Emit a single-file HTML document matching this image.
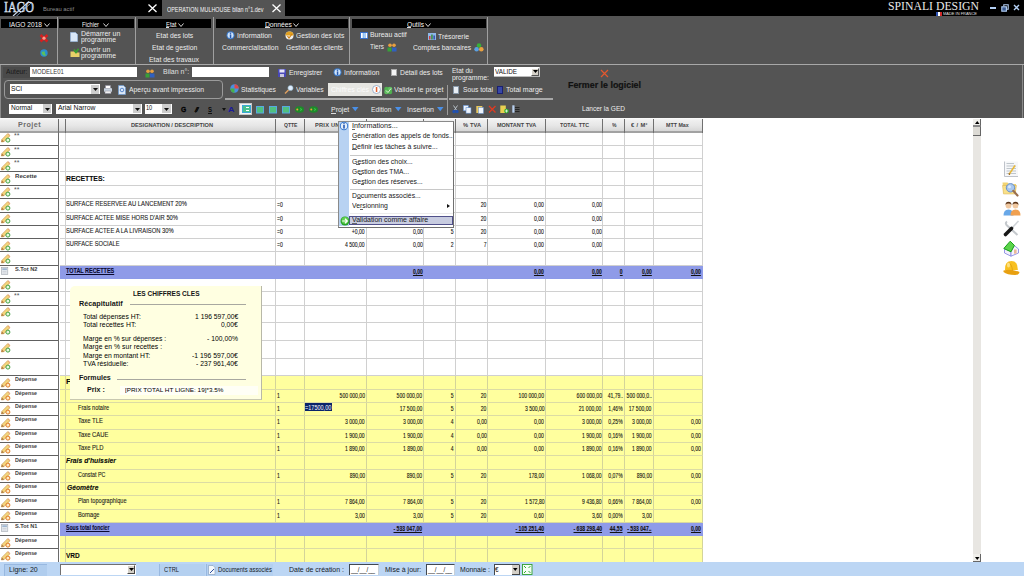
<!DOCTYPE html>
<html><head><meta charset="utf-8"><title>IAGO</title>
<style>
html,body{margin:0;padding:0;width:1024px;height:576px;overflow:hidden;background:#fff;position:relative}
.b{position:absolute;box-sizing:border-box}
.t{position:absolute;white-space:nowrap;line-height:1;transform-origin:0 0}
svg{position:absolute;overflow:visible}
</style></head><body>
<div class="b" style="left:0.00px;top:0.00px;width:1024.00px;height:16.00px;background:#000"></div>
<div class="t" style="left:4.20px;top:0.00px;font-size:14.5px;color:#9fb8da;font-family:'Liberation Serif', serif;transform:scaleX(0.8276);-webkit-text-stroke:0.45px #eef4fc;">IAGO</div>
<svg style="left:10px;top:0px" width="24" height="17" viewBox="0 0 24 17"><line x1="3" y1="16" x2="19" y2="1.5" stroke="#c8d8ee" stroke-width="1.1"/><line x1="6" y1="16.5" x2="21" y2="3" stroke="#9cb8dc" stroke-width="0.8"/></svg>
<div class="t" style="left:43.00px;top:6.00px;font-size:6.2px;color:#8c8c8c;font-family:'Liberation Sans', sans-serif;transform:scaleX(0.9385);">Bureau actif</div>
<svg style="left:147px;top:3px" width="11" height="10" viewBox="0 0 11 10"><path d="M1.5 1.5L9.5 9M9.5 1.5L1.5 9" stroke="#fff" stroke-width="1.3"/></svg>
<div class="b" style="left:162.00px;top:0.00px;width:123.00px;height:17.00px;background:#545454"></div>
<div class="t" style="left:166.80px;top:6.00px;font-size:7px;color:#f4f4f4;font-family:'Liberation Sans', sans-serif;transform:scaleX(0.7731);">OPERATION MULHOUSE bilan n°1.dev</div>
<svg style="left:271px;top:3px" width="11" height="10" viewBox="0 0 11 10"><path d="M1.5 1.5L9.5 9M9.5 1.5L1.5 9" stroke="#fff" stroke-width="1.3"/></svg>
<div class="t" style="left:888.00px;top:0.00px;font-size:12.8px;color:#e8e8e8;font-family:'Liberation Serif', serif;transform:scaleX(0.9175);">SPINALI DESIGN</div>
<div class="b" style="left:936.00px;top:12.00px;width:2.00px;height:3.50px;background:#2a4fb0"></div>
<div class="b" style="left:938.00px;top:12.00px;width:2.00px;height:3.50px;background:#fff"></div>
<div class="b" style="left:940.00px;top:12.00px;width:2.00px;height:3.50px;background:#d02828"></div>
<div class="t" style="left:943.00px;top:12.00px;font-size:4px;color:#e0e0e0;font-family:'Liberation Sans', sans-serif;transform:scaleX(0.9932);">MADE IN FRANCE</div>
<div class="b" style="left:990.00px;top:7.00px;width:6.00px;height:1.60px;background:#b4d0f4"></div>
<svg style="left:1000.5px;top:3.5px" width="8" height="8" viewBox="0 0 8 8"><rect x="0.8" y="2.8" width="4.6" height="4.4" fill="#3a5a90" stroke="#b4d0f4" stroke-width="1.1"/><path d="M2.8 2.3V0.8H7.2V5.2H5.9" fill="none" stroke="#b4d0f4" stroke-width="1.1"/></svg>
<svg style="left:1012.5px;top:3.5px" width="7" height="7" viewBox="0 0 7 7"><path d="M1 1L6 6M6 1L1 6" stroke="#b4d0f4" stroke-width="1.4"/></svg>
<div class="b" style="left:0.00px;top:16.00px;width:1024.00px;height:48.00px;background:#545454"></div>
<div class="b" style="left:162.00px;top:16.00px;width:123.00px;height:1.00px;background:#545454"></div>
<div class="b" style="left:1.00px;top:18.50px;width:55.50px;height:9.00px;background:#000"></div>
<div class="b" style="left:59.00px;top:18.50px;width:74.50px;height:9.00px;background:#000"></div>
<div class="b" style="left:138.00px;top:18.50px;width:72.50px;height:9.00px;background:#000"></div>
<div class="b" style="left:216.00px;top:18.50px;width:131.50px;height:9.00px;background:#000"></div>
<div class="b" style="left:352.00px;top:18.50px;width:133.50px;height:9.00px;background:#000"></div>
<div class="b" style="left:57.00px;top:16.50px;width:1.00px;height:47.00px;background:#a0a0a0"></div>
<div class="b" style="left:135.00px;top:16.50px;width:1.00px;height:47.00px;background:#a0a0a0"></div>
<div class="b" style="left:213.00px;top:16.50px;width:1.00px;height:47.00px;background:#a0a0a0"></div>
<div class="b" style="left:349.00px;top:16.50px;width:1.00px;height:47.00px;background:#a0a0a0"></div>
<div class="b" style="left:487.00px;top:16.50px;width:1.00px;height:47.00px;background:#a0a0a0"></div>
<div class="b" style="left:0.00px;top:64.00px;width:1024.00px;height:1.00px;background:#a8a8a8"></div>
<div class="t" style="left:9.40px;top:22.00px;font-size:6.8px;color:#f4f4f4;font-family:'Liberation Sans', sans-serif;transform:scaleX(0.9701);">IAGO 2018</div>
<div class="t" style="left:81.90px;top:22.00px;font-size:6.8px;color:#f4f4f4;font-family:'Liberation Sans', sans-serif;transform:scaleX(0.8331);">Fichier</div>
<div class="t" style="left:165.50px;top:22.00px;font-size:6.8px;color:#f4f4f4;font-family:'Liberation Sans', sans-serif;transform:scaleX(0.8682);">Etat</div>
<div class="t" style="left:264.80px;top:22.00px;font-size:6.8px;color:#f4f4f4;font-family:'Liberation Sans', sans-serif;transform:scaleX(0.9920);">Données</div>
<div class="t" style="left:406.50px;top:22.00px;font-size:6.8px;color:#f4f4f4;font-family:'Liberation Sans', sans-serif;transform:scaleX(0.9784);">Outils</div>
<svg style="left:43.5px;top:22.5px" width="6" height="4" viewBox="0 0 6 4"><path d="M0.5 0.5L3 3.5L5.5 0.5" fill="none" stroke="#f0f0f0" stroke-width="0.9"/></svg>
<svg style="left:102.5px;top:22.5px" width="6" height="4" viewBox="0 0 6 4"><path d="M0.5 0.5L3 3.5L5.5 0.5" fill="none" stroke="#f0f0f0" stroke-width="0.9"/></svg>
<svg style="left:178px;top:22.5px" width="6" height="4" viewBox="0 0 6 4"><path d="M0.5 0.5L3 3.5L5.5 0.5" fill="none" stroke="#f0f0f0" stroke-width="0.9"/></svg>
<svg style="left:293px;top:22.5px" width="6" height="4" viewBox="0 0 6 4"><path d="M0.5 0.5L3 3.5L5.5 0.5" fill="none" stroke="#f0f0f0" stroke-width="0.9"/></svg>
<svg style="left:424.5px;top:22.5px" width="6" height="4" viewBox="0 0 6 4"><path d="M0.5 0.5L3 3.5L5.5 0.5" fill="none" stroke="#f0f0f0" stroke-width="0.9"/></svg>
<div class="b" style="left:265.00px;top:27.20px;width:4.50px;height:0.70px;background:#ddd"></div>
<div class="b" style="left:406.80px;top:27.20px;width:4.50px;height:0.70px;background:#ddd"></div>
<div class="b" style="left:165.80px;top:27.20px;width:3.50px;height:0.70px;background:#ddd"></div>
<svg style="left:39px;top:33px" width="10" height="10" viewBox="0 0 10 10"><path d="M1.5 2L8.5 8.5M8.5 2L1.5 8.5" stroke="#d42020" stroke-width="2.6"/><circle cx="5" cy="5.2" r="1.6" fill="#ff9a8a"/></svg>
<svg style="left:39.5px;top:48.5px" width="8" height="8" viewBox="0 0 8 8"><circle cx="4" cy="4" r="3.7" fill="#2a8ed0"/><path d="M1.5 3.5C2.5 2 3.5 3 4.5 2.2C5.5 3.5 4 5 6.5 6C5 7.5 2.5 7 1.5 3.5Z" fill="#5cc05c"/></svg>
<svg style="left:70px;top:31.5px" width="8" height="10" viewBox="0 0 8 10"><path d="M0.5 0.5H5.5L7.5 2.5V9.5H0.5Z" fill="#dbe8f8" stroke="#9ab8e0" stroke-width="0.7"/></svg>
<div class="t" style="left:80.60px;top:31.00px;font-size:6.6px;color:#ececec;font-family:'Liberation Sans', sans-serif;transform:scaleX(1.0600);letter-spacing:0.015px;">Démarrer un</div>
<div class="t" style="left:80.60px;top:37.00px;font-size:6.6px;color:#ececec;font-family:'Liberation Sans', sans-serif;transform:scaleX(1.0380);">programme</div>
<svg style="left:69.5px;top:47.5px" width="10" height="10" viewBox="0 0 10 10"><path d="M0.5 3.5H4L5 4.5H9.5V9H0.5Z" fill="#e8d068"/><path d="M4 1.5L6 4.5L8.5 0.8" fill="none" stroke="#38a030" stroke-width="1.6"/></svg>
<div class="t" style="left:80.60px;top:47.00px;font-size:6.6px;color:#ececec;font-family:'Liberation Sans', sans-serif;transform:scaleX(1.0600);letter-spacing:0.088px;">Ouvrir un</div>
<div class="t" style="left:80.60px;top:53.00px;font-size:6.6px;color:#ececec;font-family:'Liberation Sans', sans-serif;transform:scaleX(1.0380);">programme</div>
<div class="t" style="left:155.75px;top:33.00px;font-size:6.6px;color:#ececec;font-family:'Liberation Sans', sans-serif;transform:scaleX(1.0263);">Etat des lots</div>
<div class="t" style="left:151.50px;top:45.00px;font-size:6.6px;color:#ececec;font-family:'Liberation Sans', sans-serif;transform:scaleX(1.0284);">Etat de gestion</div>
<div class="t" style="left:149.25px;top:57.00px;font-size:6.6px;color:#ececec;font-family:'Liberation Sans', sans-serif;transform:scaleX(1.0492);">Etat des travaux</div>
<svg style="left:225.5px;top:31px" width="9" height="9" viewBox="0 0 9 9"><circle cx="4.5" cy="4.3" r="4" fill="#3a78c8"/><circle cx="4.5" cy="4.3" r="3" fill="#cfe4fa"/><rect x="3.8" y="3.4" width="1.5" height="3.6" fill="#2a5ab0"/><circle cx="4.5" cy="2.3" r="0.8" fill="#2a5ab0"/></svg>
<div class="t" style="left:237.00px;top:33.00px;font-size:6.6px;color:#ececec;font-family:'Liberation Sans', sans-serif;transform:scaleX(1.0600);letter-spacing:0.002px;">Information</div>
<div class="t" style="left:221.75px;top:45.00px;font-size:6.6px;color:#ececec;font-family:'Liberation Sans', sans-serif;transform:scaleX(1.0418);">Commercialisation</div>
<svg style="left:285px;top:31px" width="9" height="9" viewBox="0 0 9 9"><circle cx="4.5" cy="4.5" r="4" fill="#f0f0f0"/><path d="M0.5 4.5A4 4 0 0 1 8.5 4.5L4.5 4.5Z" fill="#e0a020"/><path d="M2.5 5L4 7L7 3" fill="none" stroke="#d08010" stroke-width="1.2"/></svg>
<div class="t" style="left:295.75px;top:33.00px;font-size:6.6px;color:#ececec;font-family:'Liberation Sans', sans-serif;transform:scaleX(1.0205);">Gestion des lots</div>
<div class="t" style="left:286.00px;top:45.00px;font-size:6.6px;color:#ececec;font-family:'Liberation Sans', sans-serif;transform:scaleX(1.0230);">Gestion des clients</div>
<svg style="left:360px;top:31.5px" width="8" height="7" viewBox="0 0 8 7"><rect x="0" y="0" width="8" height="7" fill="#3a70c8"/><rect x="1" y="1" width="1.8" height="5" fill="#fff"/><rect x="3.2" y="1" width="1.8" height="5" fill="#9fd0ff"/><rect x="5.4" y="1" width="1.8" height="5" fill="#fff"/></svg>
<div class="t" style="left:369.50px;top:32.00px;font-size:6.6px;color:#ececec;font-family:'Liberation Sans', sans-serif;transform:scaleX(1.0444);">Bureau actif</div>
<div class="t" style="left:370.00px;top:44.00px;font-size:6.6px;color:#ececec;font-family:'Liberation Sans', sans-serif;transform:scaleX(0.9707);">Tiers</div>
<svg style="left:387px;top:42.5px" width="10" height="9" viewBox="0 0 10 9"><circle cx="3" cy="2.3" r="1.8" fill="#e8a040"/><circle cx="7" cy="2.3" r="1.8" fill="#e8a040"/><rect x="0.5" y="4.5" width="4" height="4" fill="#38a038"/><rect x="5" y="4.5" width="4.5" height="4" fill="#3060c0"/></svg>
<svg style="left:427.5px;top:33px" width="8" height="7" viewBox="0 0 8 7"><rect x="0" y="0" width="8" height="7" fill="#8fb8e8"/><rect x="1" y="3" width="1.5" height="3.5" fill="#d04040"/><rect x="3.2" y="1.5" width="1.5" height="5" fill="#3a8a3a"/><rect x="5.4" y="2.5" width="1.5" height="4" fill="#3050b0"/></svg>
<div class="t" style="left:438.00px;top:34.00px;font-size:6.6px;color:#ececec;font-family:'Liberation Sans', sans-serif;transform:scaleX(1.0398);">Trésorerie</div>
<div class="t" style="left:413.40px;top:45.00px;font-size:6.6px;color:#ececec;font-family:'Liberation Sans', sans-serif;transform:scaleX(1.0209);">Comptes bancaires</div>
<svg style="left:474px;top:42.5px" width="10" height="9" viewBox="0 0 10 9"><circle cx="5" cy="2.5" r="2.3" fill="#38b038"/><circle cx="2.6" cy="6.3" r="2.3" fill="#5ca0e0"/><circle cx="7.3" cy="6.3" r="2.3" fill="#e8a040"/></svg>
<div class="b" style="left:0.00px;top:64.70px;width:1024.00px;height:53.60px;background:#545454"></div>
<div class="b" style="left:0.00px;top:64.70px;width:1.00px;height:53.60px;background:#8a8a8a"></div>
<div class="b" style="left:1021.50px;top:64.70px;width:1.00px;height:53.60px;background:#8a8a8a"></div>
<div class="b" style="left:3.00px;top:66.50px;width:27.00px;height:11.30px;background:#4a4a4a"></div>
<div class="t" style="left:5.60px;top:69.00px;font-size:6.6px;color:#1a1a1a;font-family:'Liberation Sans', sans-serif;transform:scaleX(1.0016);">Auteur:</div>
<div class="b" style="left:30.00px;top:66.80px;width:107.00px;height:10.40px;background:#fff"></div>
<div class="t" style="left:31.90px;top:69.00px;font-size:6.6px;color:#383838;font-family:'Liberation Sans', sans-serif;transform:scaleX(0.9066);">MODELE01</div>
<svg style="left:145px;top:68.5px" width="10" height="9" viewBox="0 0 10 9"><circle cx="3" cy="2.3" r="1.8" fill="#e8a040"/><circle cx="7" cy="2.3" r="1.8" fill="#e8a040"/><rect x="0.5" y="4.5" width="4" height="4" fill="#38a038"/><rect x="5" y="4.5" width="4.5" height="4" fill="#3060c0"/></svg>
<div class="t" style="left:163.00px;top:69.00px;font-size:6.6px;color:#e0e0e0;font-family:'Liberation Sans', sans-serif;transform:scaleX(1.0600);letter-spacing:0.015px;">Bilan n°:</div>
<div class="b" style="left:192.40px;top:66.80px;width:77.00px;height:10.40px;background:#fff"></div>
<svg style="left:278px;top:68.5px" width="8" height="8" viewBox="0 0 8 8"><rect x="0" y="0" width="8" height="8" fill="#4848b8"/><rect x="1.5" y="0.5" width="5" height="3" fill="#e8e8f8"/><rect x="2" y="5" width="4" height="3" fill="#c8c8e0"/></svg>
<div class="t" style="left:288.75px;top:70.00px;font-size:6.6px;color:#ececec;font-family:'Liberation Sans', sans-serif;transform:scaleX(1.0310);">Enregistrer</div>
<svg style="left:332.8px;top:68px" width="9" height="9" viewBox="0 0 9 9"><circle cx="4.5" cy="4.3" r="4" fill="#3a78c8"/><circle cx="4.5" cy="4.3" r="3" fill="#cfe4fa"/><rect x="3.8" y="3.4" width="1.5" height="3.6" fill="#2a5ab0"/><circle cx="4.5" cy="2.3" r="0.8" fill="#2a5ab0"/></svg>
<div class="t" style="left:343.50px;top:70.00px;font-size:6.6px;color:#ececec;font-family:'Liberation Sans', sans-serif;transform:scaleX(1.0600);letter-spacing:0.049px;">Information</div>
<div class="b" style="left:390.90px;top:69.40px;width:6.30px;height:6.60px;background:#f4f4f4;border:0.7px solid #aaa"></div>
<div class="t" style="left:400.00px;top:70.00px;font-size:6.6px;color:#ececec;font-family:'Liberation Sans', sans-serif;transform:scaleX(1.0321);">Détail des lots</div>
<div class="t" style="left:452.00px;top:68.00px;font-size:6.6px;color:#ececec;font-family:'Liberation Sans', sans-serif;transform:scaleX(0.9925);">Etat du</div>
<div class="t" style="left:452.00px;top:75.00px;font-size:6.6px;color:#ececec;font-family:'Liberation Sans', sans-serif;transform:scaleX(1.0409);">programme:</div>
<div class="b" style="left:493.75px;top:66.90px;width:46.50px;height:10.60px;background:#fff;border-right:1px solid #ccc;border-bottom:1px solid #bbb"></div>
<div class="t" style="left:495.00px;top:68.00px;font-size:7px;color:#111;font-family:'Liberation Sans', sans-serif;transform:scaleX(0.9020);">VALIDE</div>
<div class="b" style="left:530.70px;top:67.50px;width:8.30px;height:8.80px;background:#d4d0c8;border-right:1px solid #555;border-bottom:1px solid #555;border-top:1px solid #fff;border-left:1px solid #fff"></div>
<svg style="left:532.5px;top:70.3px" width="5" height="3" viewBox="0 0 5 3"><path d="M0 0H5L2.5 3Z" fill="#000"/></svg>
<svg style="left:600px;top:68.5px" width="9" height="9" viewBox="0 0 9 9"><path d="M1 1L8 8M8 1L1 8" stroke="#e4582e" stroke-width="1.2"/></svg>
<div class="t" style="left:568.00px;top:81.00px;font-size:9px;color:#111;font-family:'Liberation Sans', sans-serif;font-weight:bold;transform:scaleX(0.9861);-webkit-text-stroke:0.2px #111;">Fermer le logiciel</div>
<div class="b" style="left:4.00px;top:80.00px;width:218.50px;height:18.50px;border:1.2px solid #9a9a9a;border-radius:4px"></div>
<div class="b" style="left:9.50px;top:84.40px;width:90.50px;height:10.00px;background:#fff"></div>
<div class="t" style="left:11.25px;top:86.00px;font-size:6.6px;color:#111;font-family:'Liberation Sans', sans-serif;transform:scaleX(1.0227);">SCI</div>
<div class="b" style="left:90.60px;top:85.00px;width:8.80px;height:9.00px;background:#cdcdcd"></div>
<svg style="left:92.5px;top:88.3px" width="5" height="3" viewBox="0 0 5 3"><path d="M0 0H5L2.5 3Z" fill="#111"/></svg>
<svg style="left:102.5px;top:85px" width="10" height="9" viewBox="0 0 10 9"><rect x="1" y="3" width="8" height="4" rx="1" fill="#c8d4e0"/><rect x="2.5" y="0.5" width="5" height="3" fill="#fff" stroke="#889" stroke-width="0.5"/><rect x="2" y="6" width="6" height="2.5" fill="#f0f0f0" stroke="#889" stroke-width="0.5"/></svg>
<svg style="left:118px;top:85px" width="8" height="10" viewBox="0 0 8 10"><path d="M0.5 0.5H5.5L7.5 2.5V9.5H0.5Z" fill="#dbe8f8" stroke="#6a98d0" stroke-width="0.7"/><circle cx="4" cy="5" r="1.8" fill="none" stroke="#3a70c0" stroke-width="0.8"/></svg>
<div class="t" style="left:128.50px;top:87.00px;font-size:6.6px;color:#ececec;font-family:'Liberation Sans', sans-serif;transform:scaleX(1.0347);">Aperçu avant impression</div>
<svg style="left:229.5px;top:84.4px" width="9" height="9" viewBox="0 0 9 9"><circle cx="4.5" cy="4.5" r="4.2" fill="#4a90e0"/><path d="M4.5 4.5V0.3A4.2 4.2 0 0 1 8.7 4.5Z" fill="#e04848"/><path d="M4.5 4.5H0.3A4.2 4.2 0 0 0 4.5 8.7Z" fill="#48b048"/></svg>
<div class="t" style="left:240.50px;top:87.00px;font-size:6.6px;color:#ececec;font-family:'Liberation Sans', sans-serif;transform:scaleX(1.0236);">Statistiques</div>
<svg style="left:284px;top:85px" width="10" height="9" viewBox="0 0 10 9"><circle cx="6.5" cy="3" r="2.6" fill="#dfeeff" stroke="#8ab" stroke-width="0.6"/><line x1="4.5" y1="5" x2="1" y2="8.5" stroke="#e0a060" stroke-width="1.5"/></svg>
<div class="t" style="left:295.75px;top:87.00px;font-size:6.6px;color:#ececec;font-family:'Liberation Sans', sans-serif;transform:scaleX(1.0278);">Variables</div>
<div class="b" style="left:327.90px;top:83.10px;width:54.10px;height:12.50px;background:#e6e6e2"></div>
<div class="t" style="left:331.00px;top:87.00px;font-size:6.6px;color:#fbfbfb;font-family:'Liberation Sans', sans-serif;transform:scaleX(1.0510);">Chiffres clés</div>
<svg style="left:371.5px;top:84.5px" width="9" height="9" viewBox="0 0 9 9"><circle cx="4.5" cy="4.5" r="4" fill="#fff" stroke="#88a0c0" stroke-width="0.8"/><rect x="3.8" y="2" width="1.5" height="5" fill="#e06030"/></svg>
<svg style="left:384px;top:85.5px" width="8.5" height="9" viewBox="0 0 8.5 9"><circle cx="2.5" cy="3" r="2.3" fill="#50b050"/><circle cx="6" cy="3" r="2.3" fill="#60c060"/><circle cx="2.5" cy="6" r="2.3" fill="#60c060"/><circle cx="6" cy="6" r="2.3" fill="#50b050"/><path d="M2 4.5L4 6.5L7 2.5" fill="none" stroke="#e8f8e0" stroke-width="0.9"/></svg>
<div class="t" style="left:394.00px;top:87.00px;font-size:6.6px;color:#ececec;font-family:'Liberation Sans', sans-serif;transform:scaleX(1.0600);letter-spacing:0.080px;">Valider le projet</div>
<div class="b" style="left:225.00px;top:98.40px;width:221.50px;height:1.50px;background:#a8a8a8"></div>
<div class="b" style="left:449.00px;top:98.40px;width:104.00px;height:1.50px;background:#a8a8a8"></div>
<div class="b" style="left:447.00px;top:85.00px;width:1.20px;height:29.50px;background:#9a9a9a"></div>
<div class="b" style="left:452.75px;top:85.60px;width:6.25px;height:8.00px;background:#e8eef4;border:0.6px solid #8898a8"></div>
<div class="t" style="left:462.75px;top:87.00px;font-size:6.6px;color:#ececec;font-family:'Liberation Sans', sans-serif;transform:scaleX(1.0229);">Sous total</div>
<div class="b" style="left:496.50px;top:85.60px;width:6.25px;height:8.00px;background:#3848a8;border:0.6px solid #1a2070"></div>
<div class="t" style="left:505.90px;top:87.00px;font-size:6.6px;color:#ececec;font-family:'Liberation Sans', sans-serif;transform:scaleX(1.0600);letter-spacing:0.017px;">Total marge</div>
<div class="b" style="left:9.00px;top:103.75px;width:43.00px;height:10.00px;background:#fff"></div>
<div class="t" style="left:11.00px;top:105.00px;font-size:6.6px;color:#111;font-family:'Liberation Sans', sans-serif;">Normal</div>
<div class="b" style="left:43.00px;top:104.30px;width:8.30px;height:9.00px;background:#cdcdcd"></div>
<svg style="left:44.7px;top:107.6px" width="5" height="3" viewBox="0 0 5 3"><path d="M0 0H5L2.5 3Z" fill="#111"/></svg>
<div class="b" style="left:56.00px;top:103.75px;width:85.50px;height:10.00px;background:#fff"></div>
<div class="t" style="left:57.75px;top:105.00px;font-size:6.6px;color:#111;font-family:'Liberation Sans', sans-serif;transform:scaleX(1.0336);">Arial Narrow</div>
<div class="b" style="left:132.80px;top:104.30px;width:8.30px;height:9.00px;background:#cdcdcd"></div>
<svg style="left:134.5px;top:107.6px" width="5" height="3" viewBox="0 0 5 3"><path d="M0 0H5L2.5 3Z" fill="#111"/></svg>
<div class="b" style="left:145.00px;top:103.75px;width:27.00px;height:10.00px;background:#fff"></div>
<div class="t" style="left:145.50px;top:105.00px;font-size:6.6px;color:#111;font-family:'Liberation Sans', sans-serif;transform:scaleX(0.8511);">10</div>
<div class="b" style="left:162.00px;top:104.30px;width:9.00px;height:9.00px;background:#cdcdcd"></div>
<svg style="left:164px;top:107.6px" width="5" height="3" viewBox="0 0 5 3"><path d="M0 0H5L2.5 3Z" fill="#111"/></svg>
<div class="t" style="left:180.50px;top:106.00px;font-size:7.5px;color:#000;font-family:'Liberation Sans', sans-serif;font-weight:bold;transform:scaleX(0.8898);-webkit-text-stroke:0.3px #000;">G</div>
<div class="t" style="left:194.00px;top:106.00px;font-size:7px;color:#0a0a0a;font-family:'Liberation Sans', sans-serif;font-weight:bold;font-style:italic;transform:scaleX(2.5600);">I</div>
<svg style="left:194px;top:106.5px" width="6" height="6" viewBox="0 0 6 6"><line x1="4.5" y1="0.5" x2="1.5" y2="5.5" stroke="#111" stroke-width="1.1"/></svg>
<div class="t" style="left:208.00px;top:106.00px;font-size:7px;color:#0a0a0a;font-family:'Liberation Sans', sans-serif;font-weight:bold;transform:scaleX(0.8562);">S</div>
<div class="b" style="left:208.00px;top:112.50px;width:4.00px;height:0.80px;background:#111"></div>
<svg style="left:222px;top:107.5px" width="4" height="3" viewBox="0 0 4 3"><path d="M0 0H4L2 3Z" fill="#111"/></svg>
<div class="t" style="left:228.00px;top:106.00px;font-size:7.5px;color:#1a1a9a;font-family:'Liberation Sans', sans-serif;font-weight:bold;transform:scaleX(1.1988);">A</div>
<div class="b" style="left:239.25px;top:103.10px;width:13.15px;height:11.90px;background:#f4f4f4;border:0.6px solid #c8c8c8"></div>
<svg style="left:241.5px;top:105px" width="9" height="8" viewBox="0 0 9 8"><rect x="0" y="0" width="9" height="8" fill="#3ca8d8"/><rect x="1" y="1" width="7" height="6" fill="#48c090"/><rect x="4" y="2" width="3" height="1" fill="#fff"/><rect x="4" y="5" width="3" height="1" fill="#fff"/></svg>
<svg style="left:256px;top:105.6px" width="8" height="7.5" viewBox="0 0 8 7.5"><rect x="0" y="0" width="8" height="7.5" fill="#58a8e0"/><rect x="1" y="1" width="6" height="5.5" fill="#50c080"/></svg>
<svg style="left:268.5px;top:105.6px" width="8" height="7.5" viewBox="0 0 8 7.5"><rect x="0" y="0" width="8" height="7.5" fill="#58a8e0"/><rect x="1" y="1" width="6" height="5.5" fill="#50c080"/></svg>
<svg style="left:282.25px;top:105.6px" width="8" height="7.5" viewBox="0 0 8 7.5"><rect x="0" y="0" width="8" height="7.5" fill="#58a8e0"/><rect x="1" y="1" width="6" height="5.5" fill="#50c080"/></svg>
<svg style="left:295px;top:105.8px" width="9" height="7" viewBox="0 0 9 7"><ellipse cx="4.5" cy="3.5" rx="4.5" ry="3.3" fill="#1e8a2a"/><circle cx="2.3" cy="3.5" r="1" fill="#f0a040"/><path d="M5 2.5L7 3.5L5 4.5" stroke="#3cd050" stroke-width="0.8" fill="none"/></svg>
<svg style="left:308.5px;top:105.8px" width="9" height="7" viewBox="0 0 9 7"><ellipse cx="4.5" cy="3.5" rx="4.5" ry="3.3" fill="#1e8a2a"/><circle cx="2.3" cy="3.5" r="1" fill="#f0a040"/><path d="M5 2.5L7 3.5L5 4.5" stroke="#3cd050" stroke-width="0.8" fill="none"/></svg>
<div class="t" style="left:330.75px;top:107.00px;font-size:6.6px;color:#ececec;font-family:'Liberation Sans', sans-serif;transform:scaleX(1.0589);">Projet</div>
<div class="b" style="left:331.00px;top:112.60px;width:4.50px;height:0.60px;background:#ddd"></div>
<svg style="left:352.2px;top:106.5px" width="6.5" height="4.2" viewBox="0 0 6.5 4.2"><path d="M0 0H6.5L3.25 4.2Z" fill="#4a90e8"/></svg>
<div class="t" style="left:371.00px;top:107.00px;font-size:6.6px;color:#ececec;font-family:'Liberation Sans', sans-serif;transform:scaleX(1.0163);">Edition</div>
<svg style="left:394.6px;top:106.5px" width="6.5" height="4.2" viewBox="0 0 6.5 4.2"><path d="M0 0H6.5L3.25 4.2Z" fill="#4a90e8"/></svg>
<div class="t" style="left:406.50px;top:107.00px;font-size:6.6px;color:#ececec;font-family:'Liberation Sans', sans-serif;transform:scaleX(1.0600);letter-spacing:0.022px;">Insertion</div>
<svg style="left:436.5px;top:106.5px" width="6.5" height="4.2" viewBox="0 0 6.5 4.2"><path d="M0 0H6.5L3.25 4.2Z" fill="#4a90e8"/></svg>
<svg style="left:452px;top:105px" width="7" height="8.5" viewBox="0 0 7 8.5"><circle cx="2" cy="6.5" r="1.7" fill="#2050b0"/><circle cx="5" cy="6.5" r="1.7" fill="#2050b0"/><path d="M1.5 0.5L4.5 5M5.5 0.5L2.5 5" stroke="#c0c8d0" stroke-width="0.9"/></svg>
<svg style="left:462.75px;top:105px" width="8.5" height="8.5" viewBox="0 0 8.5 8.5"><rect x="0.3" y="0.3" width="5" height="5.5" fill="#eef4fc" stroke="#5a88c8" stroke-width="0.6"/><rect x="3" y="2.7" width="5" height="5.5" fill="#eef4fc" stroke="#5a88c8" stroke-width="0.6"/></svg>
<svg style="left:475.9px;top:105px" width="8" height="8.5" viewBox="0 0 8 8.5"><rect x="0.3" y="1" width="6" height="7" fill="#e8c860"/><rect x="2.5" y="2.5" width="5" height="6" fill="#eef4fc" stroke="#5a88c8" stroke-width="0.5"/></svg>
<svg style="left:487.5px;top:105px" width="8.5" height="8.5" viewBox="0 0 8.5 8.5"><path d="M1 1L7.5 7.5M7.5 1L1 7.5" stroke="#e03a20" stroke-width="1.3"/></svg>
<svg style="left:499.6px;top:105px" width="9" height="8.5" viewBox="0 0 9 8.5"><rect x="0.3" y="0.5" width="5.5" height="7.5" fill="#e8d050"/><circle cx="6.5" cy="6" r="2.3" fill="#30b030"/><path d="M6.5 4.5V7.5M5 6H8" stroke="#fff" stroke-width="0.7"/></svg>
<svg style="left:512px;top:105px" width="8" height="8" viewBox="0 0 8 8"><rect x="0.3" y="0.3" width="2.2" height="7.4" fill="#b8d0f0"/><path d="M3 2.5H7.5M3 4.5H7.5M3 6.5H7.5" stroke="#202020" stroke-width="0.9"/></svg>
<div class="t" style="left:582.00px;top:106.00px;font-size:6.6px;color:#ececec;font-family:'Liberation Sans', sans-serif;transform:scaleX(0.9942);">Lancer la GED</div>
<div class="b" style="left:0.00px;top:118.30px;width:1024.00px;height:444.20px;background:#fff"></div>
<div class="b" style="left:0.00px;top:118.40px;width:702.50px;height:13.00px;background:linear-gradient(#fdfdfd,#f0f0f0 15%,#e6e6e6 60%,#d6d6d6)"></div>
<div class="b" style="left:65.00px;top:118.60px;width:1.20px;height:13.40px;background:#707070"></div>
<div class="b" style="left:275.15px;top:118.60px;width:1.20px;height:13.40px;background:#707070"></div>
<div class="b" style="left:303.90px;top:118.60px;width:1.20px;height:13.40px;background:#707070"></div>
<div class="b" style="left:365.50px;top:118.60px;width:1.20px;height:13.40px;background:#707070"></div>
<div class="b" style="left:422.90px;top:118.60px;width:1.20px;height:13.40px;background:#707070"></div>
<div class="b" style="left:454.65px;top:118.60px;width:1.20px;height:13.40px;background:#707070"></div>
<div class="b" style="left:486.90px;top:118.60px;width:1.20px;height:13.40px;background:#707070"></div>
<div class="b" style="left:545.15px;top:118.60px;width:1.20px;height:13.40px;background:#707070"></div>
<div class="b" style="left:602.15px;top:118.60px;width:1.20px;height:13.40px;background:#707070"></div>
<div class="b" style="left:623.90px;top:118.60px;width:1.20px;height:13.40px;background:#707070"></div>
<div class="b" style="left:652.50px;top:118.60px;width:1.20px;height:13.40px;background:#707070"></div>
<div class="b" style="left:701.90px;top:118.60px;width:1.20px;height:13.40px;background:#707070"></div>
<div class="t" style="left:18.00px;top:122.00px;font-size:6.8px;color:#6c6c6c;font-family:'Liberation Sans', sans-serif;font-weight:bold;transform:scaleX(1.0600);letter-spacing:0.411px;">Projet</div>
<div class="t" style="left:130.50px;top:123.00px;font-size:5.4px;color:#444444;font-family:'Liberation Sans', sans-serif;font-weight:bold;transform:scaleX(1.0463);">DESIGNATION / DESCRIPTION</div>
<div class="t" style="left:283.75px;top:123.00px;font-size:5.4px;color:#444444;font-family:'Liberation Sans', sans-serif;font-weight:bold;transform:scaleX(0.9391);">QTTE</div>
<div class="t" style="left:314.75px;top:123.00px;font-size:5.4px;color:#444444;font-family:'Liberation Sans', sans-serif;font-weight:bold;transform:scaleX(1.0600);letter-spacing:0.197px;">PRIX UNITAIRE</div>
<div class="t" style="left:463.00px;top:123.00px;font-size:5.4px;color:#444444;font-family:'Liberation Sans', sans-serif;font-weight:bold;transform:scaleX(1.0600);letter-spacing:0.136px;">% TVA</div>
<div class="t" style="left:497.00px;top:123.00px;font-size:5.4px;color:#444444;font-family:'Liberation Sans', sans-serif;font-weight:bold;transform:scaleX(1.0211);">MONTANT TVA</div>
<div class="t" style="left:560.00px;top:123.00px;font-size:5.4px;color:#444444;font-family:'Liberation Sans', sans-serif;font-weight:bold;transform:scaleX(0.9878);">TOTAL TTC</div>
<div class="t" style="left:611.50px;top:123.00px;font-size:5.4px;color:#444444;font-family:'Liberation Sans', sans-serif;font-weight:bold;transform:scaleX(0.9381);">%</div>
<div class="t" style="left:630.50px;top:123.00px;font-size:5.4px;color:#444444;font-family:'Liberation Sans', sans-serif;font-weight:bold;transform:scaleX(1.0600);letter-spacing:0.357px;">€ / M²</div>
<div class="t" style="left:666.25px;top:123.00px;font-size:5.4px;color:#444444;font-family:'Liberation Sans', sans-serif;font-weight:bold;transform:scaleX(0.9864);">MTT Max</div>
<div class="b" style="left:59.50px;top:131.40px;width:643.00px;height:13.70px;background:#ffffff"></div>
<div class="b" style="left:59.50px;top:145.10px;width:643.00px;height:13.40px;background:#ffffff"></div>
<div class="b" style="left:59.50px;top:158.50px;width:643.00px;height:13.25px;background:#ffffff"></div>
<div class="b" style="left:59.50px;top:171.75px;width:643.00px;height:13.65px;background:#ffffff"></div>
<div class="b" style="left:59.50px;top:185.40px;width:643.00px;height:13.10px;background:#ffffff"></div>
<div class="b" style="left:59.50px;top:198.50px;width:643.00px;height:13.50px;background:#ffffff"></div>
<div class="b" style="left:59.50px;top:212.00px;width:643.00px;height:13.50px;background:#ffffff"></div>
<div class="b" style="left:59.50px;top:225.50px;width:643.00px;height:13.00px;background:#ffffff"></div>
<div class="b" style="left:59.50px;top:238.50px;width:643.00px;height:13.40px;background:#ffffff"></div>
<div class="b" style="left:59.50px;top:251.90px;width:643.00px;height:13.50px;background:#ffffff"></div>
<div class="b" style="left:59.50px;top:265.40px;width:643.00px;height:12.70px;background:#8f9be8"></div>
<div class="b" style="left:59.50px;top:278.10px;width:643.00px;height:13.80px;background:#ffffff"></div>
<div class="b" style="left:59.50px;top:291.90px;width:643.00px;height:13.50px;background:#ffffff"></div>
<div class="b" style="left:59.50px;top:305.40px;width:643.00px;height:17.35px;background:#ffffff"></div>
<div class="b" style="left:59.50px;top:322.75px;width:643.00px;height:17.85px;background:#ffffff"></div>
<div class="b" style="left:59.50px;top:340.60px;width:643.00px;height:17.50px;background:#ffffff"></div>
<div class="b" style="left:59.50px;top:358.10px;width:643.00px;height:17.40px;background:#ffffff"></div>
<div class="b" style="left:59.50px;top:375.50px;width:643.00px;height:13.75px;background:#ffff9e"></div>
<div class="b" style="left:59.50px;top:389.25px;width:643.00px;height:13.25px;background:#ffff9e"></div>
<div class="b" style="left:59.50px;top:402.50px;width:643.00px;height:13.00px;background:#ffff9e"></div>
<div class="b" style="left:59.50px;top:415.50px;width:643.00px;height:13.60px;background:#ffff9e"></div>
<div class="b" style="left:59.50px;top:429.10px;width:643.00px;height:13.30px;background:#ffff9e"></div>
<div class="b" style="left:59.50px;top:442.40px;width:643.00px;height:13.35px;background:#ffff9e"></div>
<div class="b" style="left:59.50px;top:455.75px;width:643.00px;height:13.35px;background:#ffff9e"></div>
<div class="b" style="left:59.50px;top:469.10px;width:643.00px;height:13.30px;background:#ffff9e"></div>
<div class="b" style="left:59.50px;top:482.40px;width:643.00px;height:13.20px;background:#ffff9e"></div>
<div class="b" style="left:59.50px;top:495.60px;width:643.00px;height:13.50px;background:#ffff9e"></div>
<div class="b" style="left:59.50px;top:509.10px;width:643.00px;height:13.40px;background:#ffff9e"></div>
<div class="b" style="left:59.50px;top:522.50px;width:643.00px;height:13.10px;background:#8f9be8"></div>
<div class="b" style="left:59.50px;top:535.60px;width:643.00px;height:13.15px;background:#ffff9e"></div>
<div class="b" style="left:59.50px;top:548.75px;width:643.00px;height:13.35px;background:#ffff9e"></div>
<div class="b" style="left:65.10px;top:131.40px;width:1.00px;height:13.70px;background:#d0d0d0"></div>
<div class="b" style="left:65.10px;top:145.10px;width:1.00px;height:13.40px;background:#d0d0d0"></div>
<div class="b" style="left:65.10px;top:158.50px;width:1.00px;height:13.25px;background:#d0d0d0"></div>
<div class="b" style="left:65.10px;top:171.75px;width:1.00px;height:13.65px;background:#d0d0d0"></div>
<div class="b" style="left:65.10px;top:185.40px;width:1.00px;height:13.10px;background:#d0d0d0"></div>
<div class="b" style="left:65.10px;top:198.50px;width:1.00px;height:13.50px;background:#d0d0d0"></div>
<div class="b" style="left:65.10px;top:212.00px;width:1.00px;height:13.50px;background:#d0d0d0"></div>
<div class="b" style="left:65.10px;top:225.50px;width:1.00px;height:13.00px;background:#d0d0d0"></div>
<div class="b" style="left:65.10px;top:238.50px;width:1.00px;height:13.40px;background:#d0d0d0"></div>
<div class="b" style="left:65.10px;top:251.90px;width:1.00px;height:13.50px;background:#d0d0d0"></div>
<div class="b" style="left:65.10px;top:278.10px;width:1.00px;height:13.80px;background:#d0d0d0"></div>
<div class="b" style="left:65.10px;top:291.90px;width:1.00px;height:13.50px;background:#d0d0d0"></div>
<div class="b" style="left:65.10px;top:305.40px;width:1.00px;height:17.35px;background:#d0d0d0"></div>
<div class="b" style="left:65.10px;top:322.75px;width:1.00px;height:17.85px;background:#d0d0d0"></div>
<div class="b" style="left:65.10px;top:340.60px;width:1.00px;height:17.50px;background:#d0d0d0"></div>
<div class="b" style="left:65.10px;top:358.10px;width:1.00px;height:17.40px;background:#d0d0d0"></div>
<div class="b" style="left:65.10px;top:375.50px;width:1.00px;height:13.75px;background:#d4d49a"></div>
<div class="b" style="left:65.10px;top:389.25px;width:1.00px;height:13.25px;background:#d4d49a"></div>
<div class="b" style="left:65.10px;top:402.50px;width:1.00px;height:13.00px;background:#d4d49a"></div>
<div class="b" style="left:65.10px;top:415.50px;width:1.00px;height:13.60px;background:#d4d49a"></div>
<div class="b" style="left:65.10px;top:429.10px;width:1.00px;height:13.30px;background:#d4d49a"></div>
<div class="b" style="left:65.10px;top:442.40px;width:1.00px;height:13.35px;background:#d4d49a"></div>
<div class="b" style="left:65.10px;top:455.75px;width:1.00px;height:13.35px;background:#d4d49a"></div>
<div class="b" style="left:65.10px;top:469.10px;width:1.00px;height:13.30px;background:#d4d49a"></div>
<div class="b" style="left:65.10px;top:482.40px;width:1.00px;height:13.20px;background:#d4d49a"></div>
<div class="b" style="left:65.10px;top:495.60px;width:1.00px;height:13.50px;background:#d4d49a"></div>
<div class="b" style="left:65.10px;top:509.10px;width:1.00px;height:13.40px;background:#d4d49a"></div>
<div class="b" style="left:65.10px;top:535.60px;width:1.00px;height:13.15px;background:#d4d49a"></div>
<div class="b" style="left:65.10px;top:548.75px;width:1.00px;height:13.35px;background:#d4d49a"></div>
<div class="b" style="left:275.25px;top:131.40px;width:1.00px;height:13.70px;background:#d0d0d0"></div>
<div class="b" style="left:275.25px;top:145.10px;width:1.00px;height:13.40px;background:#d0d0d0"></div>
<div class="b" style="left:275.25px;top:158.50px;width:1.00px;height:13.25px;background:#d0d0d0"></div>
<div class="b" style="left:275.25px;top:171.75px;width:1.00px;height:13.65px;background:#d0d0d0"></div>
<div class="b" style="left:275.25px;top:185.40px;width:1.00px;height:13.10px;background:#d0d0d0"></div>
<div class="b" style="left:275.25px;top:198.50px;width:1.00px;height:13.50px;background:#d0d0d0"></div>
<div class="b" style="left:275.25px;top:212.00px;width:1.00px;height:13.50px;background:#d0d0d0"></div>
<div class="b" style="left:275.25px;top:225.50px;width:1.00px;height:13.00px;background:#d0d0d0"></div>
<div class="b" style="left:275.25px;top:238.50px;width:1.00px;height:13.40px;background:#d0d0d0"></div>
<div class="b" style="left:275.25px;top:251.90px;width:1.00px;height:13.50px;background:#d0d0d0"></div>
<div class="b" style="left:275.25px;top:278.10px;width:1.00px;height:13.80px;background:#d0d0d0"></div>
<div class="b" style="left:275.25px;top:291.90px;width:1.00px;height:13.50px;background:#d0d0d0"></div>
<div class="b" style="left:275.25px;top:305.40px;width:1.00px;height:17.35px;background:#d0d0d0"></div>
<div class="b" style="left:275.25px;top:322.75px;width:1.00px;height:17.85px;background:#d0d0d0"></div>
<div class="b" style="left:275.25px;top:340.60px;width:1.00px;height:17.50px;background:#d0d0d0"></div>
<div class="b" style="left:275.25px;top:358.10px;width:1.00px;height:17.40px;background:#d0d0d0"></div>
<div class="b" style="left:275.25px;top:375.50px;width:1.00px;height:13.75px;background:#d4d49a"></div>
<div class="b" style="left:275.25px;top:389.25px;width:1.00px;height:13.25px;background:#d4d49a"></div>
<div class="b" style="left:275.25px;top:402.50px;width:1.00px;height:13.00px;background:#d4d49a"></div>
<div class="b" style="left:275.25px;top:415.50px;width:1.00px;height:13.60px;background:#d4d49a"></div>
<div class="b" style="left:275.25px;top:429.10px;width:1.00px;height:13.30px;background:#d4d49a"></div>
<div class="b" style="left:275.25px;top:442.40px;width:1.00px;height:13.35px;background:#d4d49a"></div>
<div class="b" style="left:275.25px;top:455.75px;width:1.00px;height:13.35px;background:#d4d49a"></div>
<div class="b" style="left:275.25px;top:469.10px;width:1.00px;height:13.30px;background:#d4d49a"></div>
<div class="b" style="left:275.25px;top:482.40px;width:1.00px;height:13.20px;background:#d4d49a"></div>
<div class="b" style="left:275.25px;top:495.60px;width:1.00px;height:13.50px;background:#d4d49a"></div>
<div class="b" style="left:275.25px;top:509.10px;width:1.00px;height:13.40px;background:#d4d49a"></div>
<div class="b" style="left:275.25px;top:535.60px;width:1.00px;height:13.15px;background:#d4d49a"></div>
<div class="b" style="left:275.25px;top:548.75px;width:1.00px;height:13.35px;background:#d4d49a"></div>
<div class="b" style="left:304.00px;top:131.40px;width:1.00px;height:13.70px;background:#d0d0d0"></div>
<div class="b" style="left:304.00px;top:145.10px;width:1.00px;height:13.40px;background:#d0d0d0"></div>
<div class="b" style="left:304.00px;top:158.50px;width:1.00px;height:13.25px;background:#d0d0d0"></div>
<div class="b" style="left:304.00px;top:171.75px;width:1.00px;height:13.65px;background:#d0d0d0"></div>
<div class="b" style="left:304.00px;top:185.40px;width:1.00px;height:13.10px;background:#d0d0d0"></div>
<div class="b" style="left:304.00px;top:198.50px;width:1.00px;height:13.50px;background:#d0d0d0"></div>
<div class="b" style="left:304.00px;top:212.00px;width:1.00px;height:13.50px;background:#d0d0d0"></div>
<div class="b" style="left:304.00px;top:225.50px;width:1.00px;height:13.00px;background:#d0d0d0"></div>
<div class="b" style="left:304.00px;top:238.50px;width:1.00px;height:13.40px;background:#d0d0d0"></div>
<div class="b" style="left:304.00px;top:251.90px;width:1.00px;height:13.50px;background:#d0d0d0"></div>
<div class="b" style="left:304.00px;top:278.10px;width:1.00px;height:13.80px;background:#d0d0d0"></div>
<div class="b" style="left:304.00px;top:291.90px;width:1.00px;height:13.50px;background:#d0d0d0"></div>
<div class="b" style="left:304.00px;top:305.40px;width:1.00px;height:17.35px;background:#d0d0d0"></div>
<div class="b" style="left:304.00px;top:322.75px;width:1.00px;height:17.85px;background:#d0d0d0"></div>
<div class="b" style="left:304.00px;top:340.60px;width:1.00px;height:17.50px;background:#d0d0d0"></div>
<div class="b" style="left:304.00px;top:358.10px;width:1.00px;height:17.40px;background:#d0d0d0"></div>
<div class="b" style="left:304.00px;top:375.50px;width:1.00px;height:13.75px;background:#d4d49a"></div>
<div class="b" style="left:304.00px;top:389.25px;width:1.00px;height:13.25px;background:#d4d49a"></div>
<div class="b" style="left:304.00px;top:402.50px;width:1.00px;height:13.00px;background:#d4d49a"></div>
<div class="b" style="left:304.00px;top:415.50px;width:1.00px;height:13.60px;background:#d4d49a"></div>
<div class="b" style="left:304.00px;top:429.10px;width:1.00px;height:13.30px;background:#d4d49a"></div>
<div class="b" style="left:304.00px;top:442.40px;width:1.00px;height:13.35px;background:#d4d49a"></div>
<div class="b" style="left:304.00px;top:455.75px;width:1.00px;height:13.35px;background:#d4d49a"></div>
<div class="b" style="left:304.00px;top:469.10px;width:1.00px;height:13.30px;background:#d4d49a"></div>
<div class="b" style="left:304.00px;top:482.40px;width:1.00px;height:13.20px;background:#d4d49a"></div>
<div class="b" style="left:304.00px;top:495.60px;width:1.00px;height:13.50px;background:#d4d49a"></div>
<div class="b" style="left:304.00px;top:509.10px;width:1.00px;height:13.40px;background:#d4d49a"></div>
<div class="b" style="left:304.00px;top:535.60px;width:1.00px;height:13.15px;background:#d4d49a"></div>
<div class="b" style="left:304.00px;top:548.75px;width:1.00px;height:13.35px;background:#d4d49a"></div>
<div class="b" style="left:365.60px;top:131.40px;width:1.00px;height:13.70px;background:#d0d0d0"></div>
<div class="b" style="left:365.60px;top:145.10px;width:1.00px;height:13.40px;background:#d0d0d0"></div>
<div class="b" style="left:365.60px;top:158.50px;width:1.00px;height:13.25px;background:#d0d0d0"></div>
<div class="b" style="left:365.60px;top:171.75px;width:1.00px;height:13.65px;background:#d0d0d0"></div>
<div class="b" style="left:365.60px;top:185.40px;width:1.00px;height:13.10px;background:#d0d0d0"></div>
<div class="b" style="left:365.60px;top:198.50px;width:1.00px;height:13.50px;background:#d0d0d0"></div>
<div class="b" style="left:365.60px;top:212.00px;width:1.00px;height:13.50px;background:#d0d0d0"></div>
<div class="b" style="left:365.60px;top:225.50px;width:1.00px;height:13.00px;background:#d0d0d0"></div>
<div class="b" style="left:365.60px;top:238.50px;width:1.00px;height:13.40px;background:#d0d0d0"></div>
<div class="b" style="left:365.60px;top:251.90px;width:1.00px;height:13.50px;background:#d0d0d0"></div>
<div class="b" style="left:365.60px;top:278.10px;width:1.00px;height:13.80px;background:#d0d0d0"></div>
<div class="b" style="left:365.60px;top:291.90px;width:1.00px;height:13.50px;background:#d0d0d0"></div>
<div class="b" style="left:365.60px;top:305.40px;width:1.00px;height:17.35px;background:#d0d0d0"></div>
<div class="b" style="left:365.60px;top:322.75px;width:1.00px;height:17.85px;background:#d0d0d0"></div>
<div class="b" style="left:365.60px;top:340.60px;width:1.00px;height:17.50px;background:#d0d0d0"></div>
<div class="b" style="left:365.60px;top:358.10px;width:1.00px;height:17.40px;background:#d0d0d0"></div>
<div class="b" style="left:365.60px;top:375.50px;width:1.00px;height:13.75px;background:#d4d49a"></div>
<div class="b" style="left:365.60px;top:389.25px;width:1.00px;height:13.25px;background:#d4d49a"></div>
<div class="b" style="left:365.60px;top:402.50px;width:1.00px;height:13.00px;background:#d4d49a"></div>
<div class="b" style="left:365.60px;top:415.50px;width:1.00px;height:13.60px;background:#d4d49a"></div>
<div class="b" style="left:365.60px;top:429.10px;width:1.00px;height:13.30px;background:#d4d49a"></div>
<div class="b" style="left:365.60px;top:442.40px;width:1.00px;height:13.35px;background:#d4d49a"></div>
<div class="b" style="left:365.60px;top:455.75px;width:1.00px;height:13.35px;background:#d4d49a"></div>
<div class="b" style="left:365.60px;top:469.10px;width:1.00px;height:13.30px;background:#d4d49a"></div>
<div class="b" style="left:365.60px;top:482.40px;width:1.00px;height:13.20px;background:#d4d49a"></div>
<div class="b" style="left:365.60px;top:495.60px;width:1.00px;height:13.50px;background:#d4d49a"></div>
<div class="b" style="left:365.60px;top:509.10px;width:1.00px;height:13.40px;background:#d4d49a"></div>
<div class="b" style="left:365.60px;top:535.60px;width:1.00px;height:13.15px;background:#d4d49a"></div>
<div class="b" style="left:365.60px;top:548.75px;width:1.00px;height:13.35px;background:#d4d49a"></div>
<div class="b" style="left:423.00px;top:131.40px;width:1.00px;height:13.70px;background:#d0d0d0"></div>
<div class="b" style="left:423.00px;top:145.10px;width:1.00px;height:13.40px;background:#d0d0d0"></div>
<div class="b" style="left:423.00px;top:158.50px;width:1.00px;height:13.25px;background:#d0d0d0"></div>
<div class="b" style="left:423.00px;top:171.75px;width:1.00px;height:13.65px;background:#d0d0d0"></div>
<div class="b" style="left:423.00px;top:185.40px;width:1.00px;height:13.10px;background:#d0d0d0"></div>
<div class="b" style="left:423.00px;top:198.50px;width:1.00px;height:13.50px;background:#d0d0d0"></div>
<div class="b" style="left:423.00px;top:212.00px;width:1.00px;height:13.50px;background:#d0d0d0"></div>
<div class="b" style="left:423.00px;top:225.50px;width:1.00px;height:13.00px;background:#d0d0d0"></div>
<div class="b" style="left:423.00px;top:238.50px;width:1.00px;height:13.40px;background:#d0d0d0"></div>
<div class="b" style="left:423.00px;top:251.90px;width:1.00px;height:13.50px;background:#d0d0d0"></div>
<div class="b" style="left:423.00px;top:278.10px;width:1.00px;height:13.80px;background:#d0d0d0"></div>
<div class="b" style="left:423.00px;top:291.90px;width:1.00px;height:13.50px;background:#d0d0d0"></div>
<div class="b" style="left:423.00px;top:305.40px;width:1.00px;height:17.35px;background:#d0d0d0"></div>
<div class="b" style="left:423.00px;top:322.75px;width:1.00px;height:17.85px;background:#d0d0d0"></div>
<div class="b" style="left:423.00px;top:340.60px;width:1.00px;height:17.50px;background:#d0d0d0"></div>
<div class="b" style="left:423.00px;top:358.10px;width:1.00px;height:17.40px;background:#d0d0d0"></div>
<div class="b" style="left:423.00px;top:375.50px;width:1.00px;height:13.75px;background:#d4d49a"></div>
<div class="b" style="left:423.00px;top:389.25px;width:1.00px;height:13.25px;background:#d4d49a"></div>
<div class="b" style="left:423.00px;top:402.50px;width:1.00px;height:13.00px;background:#d4d49a"></div>
<div class="b" style="left:423.00px;top:415.50px;width:1.00px;height:13.60px;background:#d4d49a"></div>
<div class="b" style="left:423.00px;top:429.10px;width:1.00px;height:13.30px;background:#d4d49a"></div>
<div class="b" style="left:423.00px;top:442.40px;width:1.00px;height:13.35px;background:#d4d49a"></div>
<div class="b" style="left:423.00px;top:455.75px;width:1.00px;height:13.35px;background:#d4d49a"></div>
<div class="b" style="left:423.00px;top:469.10px;width:1.00px;height:13.30px;background:#d4d49a"></div>
<div class="b" style="left:423.00px;top:482.40px;width:1.00px;height:13.20px;background:#d4d49a"></div>
<div class="b" style="left:423.00px;top:495.60px;width:1.00px;height:13.50px;background:#d4d49a"></div>
<div class="b" style="left:423.00px;top:509.10px;width:1.00px;height:13.40px;background:#d4d49a"></div>
<div class="b" style="left:423.00px;top:535.60px;width:1.00px;height:13.15px;background:#d4d49a"></div>
<div class="b" style="left:423.00px;top:548.75px;width:1.00px;height:13.35px;background:#d4d49a"></div>
<div class="b" style="left:454.75px;top:131.40px;width:1.00px;height:13.70px;background:#d0d0d0"></div>
<div class="b" style="left:454.75px;top:145.10px;width:1.00px;height:13.40px;background:#d0d0d0"></div>
<div class="b" style="left:454.75px;top:158.50px;width:1.00px;height:13.25px;background:#d0d0d0"></div>
<div class="b" style="left:454.75px;top:171.75px;width:1.00px;height:13.65px;background:#d0d0d0"></div>
<div class="b" style="left:454.75px;top:185.40px;width:1.00px;height:13.10px;background:#d0d0d0"></div>
<div class="b" style="left:454.75px;top:198.50px;width:1.00px;height:13.50px;background:#d0d0d0"></div>
<div class="b" style="left:454.75px;top:212.00px;width:1.00px;height:13.50px;background:#d0d0d0"></div>
<div class="b" style="left:454.75px;top:225.50px;width:1.00px;height:13.00px;background:#d0d0d0"></div>
<div class="b" style="left:454.75px;top:238.50px;width:1.00px;height:13.40px;background:#d0d0d0"></div>
<div class="b" style="left:454.75px;top:251.90px;width:1.00px;height:13.50px;background:#d0d0d0"></div>
<div class="b" style="left:454.75px;top:278.10px;width:1.00px;height:13.80px;background:#d0d0d0"></div>
<div class="b" style="left:454.75px;top:291.90px;width:1.00px;height:13.50px;background:#d0d0d0"></div>
<div class="b" style="left:454.75px;top:305.40px;width:1.00px;height:17.35px;background:#d0d0d0"></div>
<div class="b" style="left:454.75px;top:322.75px;width:1.00px;height:17.85px;background:#d0d0d0"></div>
<div class="b" style="left:454.75px;top:340.60px;width:1.00px;height:17.50px;background:#d0d0d0"></div>
<div class="b" style="left:454.75px;top:358.10px;width:1.00px;height:17.40px;background:#d0d0d0"></div>
<div class="b" style="left:454.75px;top:375.50px;width:1.00px;height:13.75px;background:#d4d49a"></div>
<div class="b" style="left:454.75px;top:389.25px;width:1.00px;height:13.25px;background:#d4d49a"></div>
<div class="b" style="left:454.75px;top:402.50px;width:1.00px;height:13.00px;background:#d4d49a"></div>
<div class="b" style="left:454.75px;top:415.50px;width:1.00px;height:13.60px;background:#d4d49a"></div>
<div class="b" style="left:454.75px;top:429.10px;width:1.00px;height:13.30px;background:#d4d49a"></div>
<div class="b" style="left:454.75px;top:442.40px;width:1.00px;height:13.35px;background:#d4d49a"></div>
<div class="b" style="left:454.75px;top:455.75px;width:1.00px;height:13.35px;background:#d4d49a"></div>
<div class="b" style="left:454.75px;top:469.10px;width:1.00px;height:13.30px;background:#d4d49a"></div>
<div class="b" style="left:454.75px;top:482.40px;width:1.00px;height:13.20px;background:#d4d49a"></div>
<div class="b" style="left:454.75px;top:495.60px;width:1.00px;height:13.50px;background:#d4d49a"></div>
<div class="b" style="left:454.75px;top:509.10px;width:1.00px;height:13.40px;background:#d4d49a"></div>
<div class="b" style="left:454.75px;top:535.60px;width:1.00px;height:13.15px;background:#d4d49a"></div>
<div class="b" style="left:454.75px;top:548.75px;width:1.00px;height:13.35px;background:#d4d49a"></div>
<div class="b" style="left:487.00px;top:131.40px;width:1.00px;height:13.70px;background:#d0d0d0"></div>
<div class="b" style="left:487.00px;top:145.10px;width:1.00px;height:13.40px;background:#d0d0d0"></div>
<div class="b" style="left:487.00px;top:158.50px;width:1.00px;height:13.25px;background:#d0d0d0"></div>
<div class="b" style="left:487.00px;top:171.75px;width:1.00px;height:13.65px;background:#d0d0d0"></div>
<div class="b" style="left:487.00px;top:185.40px;width:1.00px;height:13.10px;background:#d0d0d0"></div>
<div class="b" style="left:487.00px;top:198.50px;width:1.00px;height:13.50px;background:#d0d0d0"></div>
<div class="b" style="left:487.00px;top:212.00px;width:1.00px;height:13.50px;background:#d0d0d0"></div>
<div class="b" style="left:487.00px;top:225.50px;width:1.00px;height:13.00px;background:#d0d0d0"></div>
<div class="b" style="left:487.00px;top:238.50px;width:1.00px;height:13.40px;background:#d0d0d0"></div>
<div class="b" style="left:487.00px;top:251.90px;width:1.00px;height:13.50px;background:#d0d0d0"></div>
<div class="b" style="left:487.00px;top:278.10px;width:1.00px;height:13.80px;background:#d0d0d0"></div>
<div class="b" style="left:487.00px;top:291.90px;width:1.00px;height:13.50px;background:#d0d0d0"></div>
<div class="b" style="left:487.00px;top:305.40px;width:1.00px;height:17.35px;background:#d0d0d0"></div>
<div class="b" style="left:487.00px;top:322.75px;width:1.00px;height:17.85px;background:#d0d0d0"></div>
<div class="b" style="left:487.00px;top:340.60px;width:1.00px;height:17.50px;background:#d0d0d0"></div>
<div class="b" style="left:487.00px;top:358.10px;width:1.00px;height:17.40px;background:#d0d0d0"></div>
<div class="b" style="left:487.00px;top:375.50px;width:1.00px;height:13.75px;background:#d4d49a"></div>
<div class="b" style="left:487.00px;top:389.25px;width:1.00px;height:13.25px;background:#d4d49a"></div>
<div class="b" style="left:487.00px;top:402.50px;width:1.00px;height:13.00px;background:#d4d49a"></div>
<div class="b" style="left:487.00px;top:415.50px;width:1.00px;height:13.60px;background:#d4d49a"></div>
<div class="b" style="left:487.00px;top:429.10px;width:1.00px;height:13.30px;background:#d4d49a"></div>
<div class="b" style="left:487.00px;top:442.40px;width:1.00px;height:13.35px;background:#d4d49a"></div>
<div class="b" style="left:487.00px;top:455.75px;width:1.00px;height:13.35px;background:#d4d49a"></div>
<div class="b" style="left:487.00px;top:469.10px;width:1.00px;height:13.30px;background:#d4d49a"></div>
<div class="b" style="left:487.00px;top:482.40px;width:1.00px;height:13.20px;background:#d4d49a"></div>
<div class="b" style="left:487.00px;top:495.60px;width:1.00px;height:13.50px;background:#d4d49a"></div>
<div class="b" style="left:487.00px;top:509.10px;width:1.00px;height:13.40px;background:#d4d49a"></div>
<div class="b" style="left:487.00px;top:535.60px;width:1.00px;height:13.15px;background:#d4d49a"></div>
<div class="b" style="left:487.00px;top:548.75px;width:1.00px;height:13.35px;background:#d4d49a"></div>
<div class="b" style="left:545.25px;top:131.40px;width:1.00px;height:13.70px;background:#d0d0d0"></div>
<div class="b" style="left:545.25px;top:145.10px;width:1.00px;height:13.40px;background:#d0d0d0"></div>
<div class="b" style="left:545.25px;top:158.50px;width:1.00px;height:13.25px;background:#d0d0d0"></div>
<div class="b" style="left:545.25px;top:171.75px;width:1.00px;height:13.65px;background:#d0d0d0"></div>
<div class="b" style="left:545.25px;top:185.40px;width:1.00px;height:13.10px;background:#d0d0d0"></div>
<div class="b" style="left:545.25px;top:198.50px;width:1.00px;height:13.50px;background:#d0d0d0"></div>
<div class="b" style="left:545.25px;top:212.00px;width:1.00px;height:13.50px;background:#d0d0d0"></div>
<div class="b" style="left:545.25px;top:225.50px;width:1.00px;height:13.00px;background:#d0d0d0"></div>
<div class="b" style="left:545.25px;top:238.50px;width:1.00px;height:13.40px;background:#d0d0d0"></div>
<div class="b" style="left:545.25px;top:251.90px;width:1.00px;height:13.50px;background:#d0d0d0"></div>
<div class="b" style="left:545.25px;top:278.10px;width:1.00px;height:13.80px;background:#d0d0d0"></div>
<div class="b" style="left:545.25px;top:291.90px;width:1.00px;height:13.50px;background:#d0d0d0"></div>
<div class="b" style="left:545.25px;top:305.40px;width:1.00px;height:17.35px;background:#d0d0d0"></div>
<div class="b" style="left:545.25px;top:322.75px;width:1.00px;height:17.85px;background:#d0d0d0"></div>
<div class="b" style="left:545.25px;top:340.60px;width:1.00px;height:17.50px;background:#d0d0d0"></div>
<div class="b" style="left:545.25px;top:358.10px;width:1.00px;height:17.40px;background:#d0d0d0"></div>
<div class="b" style="left:545.25px;top:375.50px;width:1.00px;height:13.75px;background:#d4d49a"></div>
<div class="b" style="left:545.25px;top:389.25px;width:1.00px;height:13.25px;background:#d4d49a"></div>
<div class="b" style="left:545.25px;top:402.50px;width:1.00px;height:13.00px;background:#d4d49a"></div>
<div class="b" style="left:545.25px;top:415.50px;width:1.00px;height:13.60px;background:#d4d49a"></div>
<div class="b" style="left:545.25px;top:429.10px;width:1.00px;height:13.30px;background:#d4d49a"></div>
<div class="b" style="left:545.25px;top:442.40px;width:1.00px;height:13.35px;background:#d4d49a"></div>
<div class="b" style="left:545.25px;top:455.75px;width:1.00px;height:13.35px;background:#d4d49a"></div>
<div class="b" style="left:545.25px;top:469.10px;width:1.00px;height:13.30px;background:#d4d49a"></div>
<div class="b" style="left:545.25px;top:482.40px;width:1.00px;height:13.20px;background:#d4d49a"></div>
<div class="b" style="left:545.25px;top:495.60px;width:1.00px;height:13.50px;background:#d4d49a"></div>
<div class="b" style="left:545.25px;top:509.10px;width:1.00px;height:13.40px;background:#d4d49a"></div>
<div class="b" style="left:545.25px;top:535.60px;width:1.00px;height:13.15px;background:#d4d49a"></div>
<div class="b" style="left:545.25px;top:548.75px;width:1.00px;height:13.35px;background:#d4d49a"></div>
<div class="b" style="left:602.25px;top:131.40px;width:1.00px;height:13.70px;background:#d0d0d0"></div>
<div class="b" style="left:602.25px;top:145.10px;width:1.00px;height:13.40px;background:#d0d0d0"></div>
<div class="b" style="left:602.25px;top:158.50px;width:1.00px;height:13.25px;background:#d0d0d0"></div>
<div class="b" style="left:602.25px;top:171.75px;width:1.00px;height:13.65px;background:#d0d0d0"></div>
<div class="b" style="left:602.25px;top:185.40px;width:1.00px;height:13.10px;background:#d0d0d0"></div>
<div class="b" style="left:602.25px;top:198.50px;width:1.00px;height:13.50px;background:#d0d0d0"></div>
<div class="b" style="left:602.25px;top:212.00px;width:1.00px;height:13.50px;background:#d0d0d0"></div>
<div class="b" style="left:602.25px;top:225.50px;width:1.00px;height:13.00px;background:#d0d0d0"></div>
<div class="b" style="left:602.25px;top:238.50px;width:1.00px;height:13.40px;background:#d0d0d0"></div>
<div class="b" style="left:602.25px;top:251.90px;width:1.00px;height:13.50px;background:#d0d0d0"></div>
<div class="b" style="left:602.25px;top:278.10px;width:1.00px;height:13.80px;background:#d0d0d0"></div>
<div class="b" style="left:602.25px;top:291.90px;width:1.00px;height:13.50px;background:#d0d0d0"></div>
<div class="b" style="left:602.25px;top:305.40px;width:1.00px;height:17.35px;background:#d0d0d0"></div>
<div class="b" style="left:602.25px;top:322.75px;width:1.00px;height:17.85px;background:#d0d0d0"></div>
<div class="b" style="left:602.25px;top:340.60px;width:1.00px;height:17.50px;background:#d0d0d0"></div>
<div class="b" style="left:602.25px;top:358.10px;width:1.00px;height:17.40px;background:#d0d0d0"></div>
<div class="b" style="left:602.25px;top:375.50px;width:1.00px;height:13.75px;background:#d4d49a"></div>
<div class="b" style="left:602.25px;top:389.25px;width:1.00px;height:13.25px;background:#d4d49a"></div>
<div class="b" style="left:602.25px;top:402.50px;width:1.00px;height:13.00px;background:#d4d49a"></div>
<div class="b" style="left:602.25px;top:415.50px;width:1.00px;height:13.60px;background:#d4d49a"></div>
<div class="b" style="left:602.25px;top:429.10px;width:1.00px;height:13.30px;background:#d4d49a"></div>
<div class="b" style="left:602.25px;top:442.40px;width:1.00px;height:13.35px;background:#d4d49a"></div>
<div class="b" style="left:602.25px;top:455.75px;width:1.00px;height:13.35px;background:#d4d49a"></div>
<div class="b" style="left:602.25px;top:469.10px;width:1.00px;height:13.30px;background:#d4d49a"></div>
<div class="b" style="left:602.25px;top:482.40px;width:1.00px;height:13.20px;background:#d4d49a"></div>
<div class="b" style="left:602.25px;top:495.60px;width:1.00px;height:13.50px;background:#d4d49a"></div>
<div class="b" style="left:602.25px;top:509.10px;width:1.00px;height:13.40px;background:#d4d49a"></div>
<div class="b" style="left:602.25px;top:535.60px;width:1.00px;height:13.15px;background:#d4d49a"></div>
<div class="b" style="left:602.25px;top:548.75px;width:1.00px;height:13.35px;background:#d4d49a"></div>
<div class="b" style="left:624.00px;top:131.40px;width:1.00px;height:13.70px;background:#d0d0d0"></div>
<div class="b" style="left:624.00px;top:145.10px;width:1.00px;height:13.40px;background:#d0d0d0"></div>
<div class="b" style="left:624.00px;top:158.50px;width:1.00px;height:13.25px;background:#d0d0d0"></div>
<div class="b" style="left:624.00px;top:171.75px;width:1.00px;height:13.65px;background:#d0d0d0"></div>
<div class="b" style="left:624.00px;top:185.40px;width:1.00px;height:13.10px;background:#d0d0d0"></div>
<div class="b" style="left:624.00px;top:198.50px;width:1.00px;height:13.50px;background:#d0d0d0"></div>
<div class="b" style="left:624.00px;top:212.00px;width:1.00px;height:13.50px;background:#d0d0d0"></div>
<div class="b" style="left:624.00px;top:225.50px;width:1.00px;height:13.00px;background:#d0d0d0"></div>
<div class="b" style="left:624.00px;top:238.50px;width:1.00px;height:13.40px;background:#d0d0d0"></div>
<div class="b" style="left:624.00px;top:251.90px;width:1.00px;height:13.50px;background:#d0d0d0"></div>
<div class="b" style="left:624.00px;top:278.10px;width:1.00px;height:13.80px;background:#d0d0d0"></div>
<div class="b" style="left:624.00px;top:291.90px;width:1.00px;height:13.50px;background:#d0d0d0"></div>
<div class="b" style="left:624.00px;top:305.40px;width:1.00px;height:17.35px;background:#d0d0d0"></div>
<div class="b" style="left:624.00px;top:322.75px;width:1.00px;height:17.85px;background:#d0d0d0"></div>
<div class="b" style="left:624.00px;top:340.60px;width:1.00px;height:17.50px;background:#d0d0d0"></div>
<div class="b" style="left:624.00px;top:358.10px;width:1.00px;height:17.40px;background:#d0d0d0"></div>
<div class="b" style="left:624.00px;top:375.50px;width:1.00px;height:13.75px;background:#d4d49a"></div>
<div class="b" style="left:624.00px;top:389.25px;width:1.00px;height:13.25px;background:#d4d49a"></div>
<div class="b" style="left:624.00px;top:402.50px;width:1.00px;height:13.00px;background:#d4d49a"></div>
<div class="b" style="left:624.00px;top:415.50px;width:1.00px;height:13.60px;background:#d4d49a"></div>
<div class="b" style="left:624.00px;top:429.10px;width:1.00px;height:13.30px;background:#d4d49a"></div>
<div class="b" style="left:624.00px;top:442.40px;width:1.00px;height:13.35px;background:#d4d49a"></div>
<div class="b" style="left:624.00px;top:455.75px;width:1.00px;height:13.35px;background:#d4d49a"></div>
<div class="b" style="left:624.00px;top:469.10px;width:1.00px;height:13.30px;background:#d4d49a"></div>
<div class="b" style="left:624.00px;top:482.40px;width:1.00px;height:13.20px;background:#d4d49a"></div>
<div class="b" style="left:624.00px;top:495.60px;width:1.00px;height:13.50px;background:#d4d49a"></div>
<div class="b" style="left:624.00px;top:509.10px;width:1.00px;height:13.40px;background:#d4d49a"></div>
<div class="b" style="left:624.00px;top:535.60px;width:1.00px;height:13.15px;background:#d4d49a"></div>
<div class="b" style="left:624.00px;top:548.75px;width:1.00px;height:13.35px;background:#d4d49a"></div>
<div class="b" style="left:652.60px;top:131.40px;width:1.00px;height:13.70px;background:#d0d0d0"></div>
<div class="b" style="left:652.60px;top:145.10px;width:1.00px;height:13.40px;background:#d0d0d0"></div>
<div class="b" style="left:652.60px;top:158.50px;width:1.00px;height:13.25px;background:#d0d0d0"></div>
<div class="b" style="left:652.60px;top:171.75px;width:1.00px;height:13.65px;background:#d0d0d0"></div>
<div class="b" style="left:652.60px;top:185.40px;width:1.00px;height:13.10px;background:#d0d0d0"></div>
<div class="b" style="left:652.60px;top:198.50px;width:1.00px;height:13.50px;background:#d0d0d0"></div>
<div class="b" style="left:652.60px;top:212.00px;width:1.00px;height:13.50px;background:#d0d0d0"></div>
<div class="b" style="left:652.60px;top:225.50px;width:1.00px;height:13.00px;background:#d0d0d0"></div>
<div class="b" style="left:652.60px;top:238.50px;width:1.00px;height:13.40px;background:#d0d0d0"></div>
<div class="b" style="left:652.60px;top:251.90px;width:1.00px;height:13.50px;background:#d0d0d0"></div>
<div class="b" style="left:652.60px;top:278.10px;width:1.00px;height:13.80px;background:#d0d0d0"></div>
<div class="b" style="left:652.60px;top:291.90px;width:1.00px;height:13.50px;background:#d0d0d0"></div>
<div class="b" style="left:652.60px;top:305.40px;width:1.00px;height:17.35px;background:#d0d0d0"></div>
<div class="b" style="left:652.60px;top:322.75px;width:1.00px;height:17.85px;background:#d0d0d0"></div>
<div class="b" style="left:652.60px;top:340.60px;width:1.00px;height:17.50px;background:#d0d0d0"></div>
<div class="b" style="left:652.60px;top:358.10px;width:1.00px;height:17.40px;background:#d0d0d0"></div>
<div class="b" style="left:652.60px;top:375.50px;width:1.00px;height:13.75px;background:#d4d49a"></div>
<div class="b" style="left:652.60px;top:389.25px;width:1.00px;height:13.25px;background:#d4d49a"></div>
<div class="b" style="left:652.60px;top:402.50px;width:1.00px;height:13.00px;background:#d4d49a"></div>
<div class="b" style="left:652.60px;top:415.50px;width:1.00px;height:13.60px;background:#d4d49a"></div>
<div class="b" style="left:652.60px;top:429.10px;width:1.00px;height:13.30px;background:#d4d49a"></div>
<div class="b" style="left:652.60px;top:442.40px;width:1.00px;height:13.35px;background:#d4d49a"></div>
<div class="b" style="left:652.60px;top:455.75px;width:1.00px;height:13.35px;background:#d4d49a"></div>
<div class="b" style="left:652.60px;top:469.10px;width:1.00px;height:13.30px;background:#d4d49a"></div>
<div class="b" style="left:652.60px;top:482.40px;width:1.00px;height:13.20px;background:#d4d49a"></div>
<div class="b" style="left:652.60px;top:495.60px;width:1.00px;height:13.50px;background:#d4d49a"></div>
<div class="b" style="left:652.60px;top:509.10px;width:1.00px;height:13.40px;background:#d4d49a"></div>
<div class="b" style="left:652.60px;top:535.60px;width:1.00px;height:13.15px;background:#d4d49a"></div>
<div class="b" style="left:652.60px;top:548.75px;width:1.00px;height:13.35px;background:#d4d49a"></div>
<div class="b" style="left:702.00px;top:131.40px;width:1.00px;height:13.70px;background:#d0d0d0"></div>
<div class="b" style="left:702.00px;top:145.10px;width:1.00px;height:13.40px;background:#d0d0d0"></div>
<div class="b" style="left:702.00px;top:158.50px;width:1.00px;height:13.25px;background:#d0d0d0"></div>
<div class="b" style="left:702.00px;top:171.75px;width:1.00px;height:13.65px;background:#d0d0d0"></div>
<div class="b" style="left:702.00px;top:185.40px;width:1.00px;height:13.10px;background:#d0d0d0"></div>
<div class="b" style="left:702.00px;top:198.50px;width:1.00px;height:13.50px;background:#d0d0d0"></div>
<div class="b" style="left:702.00px;top:212.00px;width:1.00px;height:13.50px;background:#d0d0d0"></div>
<div class="b" style="left:702.00px;top:225.50px;width:1.00px;height:13.00px;background:#d0d0d0"></div>
<div class="b" style="left:702.00px;top:238.50px;width:1.00px;height:13.40px;background:#d0d0d0"></div>
<div class="b" style="left:702.00px;top:251.90px;width:1.00px;height:13.50px;background:#d0d0d0"></div>
<div class="b" style="left:702.00px;top:278.10px;width:1.00px;height:13.80px;background:#d0d0d0"></div>
<div class="b" style="left:702.00px;top:291.90px;width:1.00px;height:13.50px;background:#d0d0d0"></div>
<div class="b" style="left:702.00px;top:305.40px;width:1.00px;height:17.35px;background:#d0d0d0"></div>
<div class="b" style="left:702.00px;top:322.75px;width:1.00px;height:17.85px;background:#d0d0d0"></div>
<div class="b" style="left:702.00px;top:340.60px;width:1.00px;height:17.50px;background:#d0d0d0"></div>
<div class="b" style="left:702.00px;top:358.10px;width:1.00px;height:17.40px;background:#d0d0d0"></div>
<div class="b" style="left:702.00px;top:375.50px;width:1.00px;height:13.75px;background:#d4d49a"></div>
<div class="b" style="left:702.00px;top:389.25px;width:1.00px;height:13.25px;background:#d4d49a"></div>
<div class="b" style="left:702.00px;top:402.50px;width:1.00px;height:13.00px;background:#d4d49a"></div>
<div class="b" style="left:702.00px;top:415.50px;width:1.00px;height:13.60px;background:#d4d49a"></div>
<div class="b" style="left:702.00px;top:429.10px;width:1.00px;height:13.30px;background:#d4d49a"></div>
<div class="b" style="left:702.00px;top:442.40px;width:1.00px;height:13.35px;background:#d4d49a"></div>
<div class="b" style="left:702.00px;top:455.75px;width:1.00px;height:13.35px;background:#d4d49a"></div>
<div class="b" style="left:702.00px;top:469.10px;width:1.00px;height:13.30px;background:#d4d49a"></div>
<div class="b" style="left:702.00px;top:482.40px;width:1.00px;height:13.20px;background:#d4d49a"></div>
<div class="b" style="left:702.00px;top:495.60px;width:1.00px;height:13.50px;background:#d4d49a"></div>
<div class="b" style="left:702.00px;top:509.10px;width:1.00px;height:13.40px;background:#d4d49a"></div>
<div class="b" style="left:702.00px;top:535.60px;width:1.00px;height:13.15px;background:#d4d49a"></div>
<div class="b" style="left:702.00px;top:548.75px;width:1.00px;height:13.35px;background:#d4d49a"></div>
<div class="b" style="left:59.50px;top:144.60px;width:643.00px;height:1.00px;background:#d0d0d0"></div>
<div class="b" style="left:59.50px;top:158.00px;width:643.00px;height:1.00px;background:#d0d0d0"></div>
<div class="b" style="left:59.50px;top:171.25px;width:643.00px;height:1.00px;background:#d0d0d0"></div>
<div class="b" style="left:59.50px;top:184.90px;width:643.00px;height:1.00px;background:#d0d0d0"></div>
<div class="b" style="left:59.50px;top:198.00px;width:643.00px;height:1.00px;background:#d0d0d0"></div>
<div class="b" style="left:59.50px;top:211.50px;width:643.00px;height:1.00px;background:#d0d0d0"></div>
<div class="b" style="left:59.50px;top:225.00px;width:643.00px;height:1.00px;background:#d0d0d0"></div>
<div class="b" style="left:59.50px;top:238.00px;width:643.00px;height:1.00px;background:#d0d0d0"></div>
<div class="b" style="left:59.50px;top:251.40px;width:643.00px;height:1.00px;background:#d0d0d0"></div>
<div class="b" style="left:59.50px;top:264.90px;width:643.00px;height:1.00px;background:#d0d0d0"></div>
<div class="b" style="left:59.50px;top:277.60px;width:643.00px;height:1.00px;background:#8c9ae8"></div>
<div class="b" style="left:59.50px;top:291.40px;width:643.00px;height:1.00px;background:#d0d0d0"></div>
<div class="b" style="left:59.50px;top:304.90px;width:643.00px;height:1.00px;background:#d0d0d0"></div>
<div class="b" style="left:59.50px;top:322.25px;width:643.00px;height:1.00px;background:#d0d0d0"></div>
<div class="b" style="left:59.50px;top:340.10px;width:643.00px;height:1.00px;background:#d0d0d0"></div>
<div class="b" style="left:59.50px;top:357.60px;width:643.00px;height:1.00px;background:#d0d0d0"></div>
<div class="b" style="left:59.50px;top:375.00px;width:643.00px;height:1.00px;background:#d0d0d0"></div>
<div class="b" style="left:59.50px;top:388.75px;width:643.00px;height:1.00px;background:#dcdca4"></div>
<div class="b" style="left:59.50px;top:402.00px;width:643.00px;height:1.00px;background:#dcdca4"></div>
<div class="b" style="left:59.50px;top:415.00px;width:643.00px;height:1.00px;background:#dcdca4"></div>
<div class="b" style="left:59.50px;top:428.60px;width:643.00px;height:1.00px;background:#dcdca4"></div>
<div class="b" style="left:59.50px;top:441.90px;width:643.00px;height:1.00px;background:#dcdca4"></div>
<div class="b" style="left:59.50px;top:455.25px;width:643.00px;height:1.00px;background:#dcdca4"></div>
<div class="b" style="left:59.50px;top:468.60px;width:643.00px;height:1.00px;background:#dcdca4"></div>
<div class="b" style="left:59.50px;top:481.90px;width:643.00px;height:1.00px;background:#dcdca4"></div>
<div class="b" style="left:59.50px;top:495.10px;width:643.00px;height:1.00px;background:#dcdca4"></div>
<div class="b" style="left:59.50px;top:508.60px;width:643.00px;height:1.00px;background:#dcdca4"></div>
<div class="b" style="left:59.50px;top:522.00px;width:643.00px;height:1.00px;background:#d8d8a0"></div>
<div class="b" style="left:59.50px;top:535.10px;width:643.00px;height:1.00px;background:#8c9ae8"></div>
<div class="b" style="left:59.50px;top:548.25px;width:643.00px;height:1.00px;background:#dcdca4"></div>
<div class="b" style="left:59.50px;top:561.60px;width:643.00px;height:1.00px;background:#d8d8a0"></div>
<div class="b" style="left:0.00px;top:131.40px;width:58.60px;height:431.00px;background:#fff"></div>
<div class="b" style="left:0.00px;top:144.60px;width:58.60px;height:1.00px;background:#606060"></div>
<div class="b" style="left:0.00px;top:158.00px;width:58.60px;height:1.00px;background:#606060"></div>
<div class="b" style="left:0.00px;top:171.25px;width:58.60px;height:1.00px;background:#606060"></div>
<div class="b" style="left:0.00px;top:184.90px;width:58.60px;height:1.00px;background:#606060"></div>
<div class="b" style="left:0.00px;top:198.00px;width:58.60px;height:1.00px;background:#606060"></div>
<div class="b" style="left:0.00px;top:211.50px;width:58.60px;height:1.00px;background:#606060"></div>
<div class="b" style="left:0.00px;top:225.00px;width:58.60px;height:1.00px;background:#606060"></div>
<div class="b" style="left:0.00px;top:238.00px;width:58.60px;height:1.00px;background:#606060"></div>
<div class="b" style="left:0.00px;top:251.40px;width:58.60px;height:1.00px;background:#606060"></div>
<div class="b" style="left:0.00px;top:264.90px;width:58.60px;height:1.00px;background:#606060"></div>
<div class="b" style="left:0.00px;top:277.60px;width:58.60px;height:1.00px;background:#606060"></div>
<div class="b" style="left:0.00px;top:291.40px;width:58.60px;height:1.00px;background:#606060"></div>
<div class="b" style="left:0.00px;top:304.90px;width:58.60px;height:1.00px;background:#606060"></div>
<div class="b" style="left:0.00px;top:322.25px;width:58.60px;height:1.00px;background:#606060"></div>
<div class="b" style="left:0.00px;top:340.10px;width:58.60px;height:1.00px;background:#606060"></div>
<div class="b" style="left:0.00px;top:357.60px;width:58.60px;height:1.00px;background:#606060"></div>
<div class="b" style="left:0.00px;top:375.00px;width:58.60px;height:1.00px;background:#606060"></div>
<div class="b" style="left:0.00px;top:388.75px;width:58.60px;height:1.00px;background:#606060"></div>
<div class="b" style="left:0.00px;top:402.00px;width:58.60px;height:1.00px;background:#606060"></div>
<div class="b" style="left:0.00px;top:415.00px;width:58.60px;height:1.00px;background:#606060"></div>
<div class="b" style="left:0.00px;top:428.60px;width:58.60px;height:1.00px;background:#606060"></div>
<div class="b" style="left:0.00px;top:441.90px;width:58.60px;height:1.00px;background:#606060"></div>
<div class="b" style="left:0.00px;top:455.25px;width:58.60px;height:1.00px;background:#606060"></div>
<div class="b" style="left:0.00px;top:468.60px;width:58.60px;height:1.00px;background:#606060"></div>
<div class="b" style="left:0.00px;top:481.90px;width:58.60px;height:1.00px;background:#606060"></div>
<div class="b" style="left:0.00px;top:495.10px;width:58.60px;height:1.00px;background:#606060"></div>
<div class="b" style="left:0.00px;top:508.60px;width:58.60px;height:1.00px;background:#606060"></div>
<div class="b" style="left:0.00px;top:522.00px;width:58.60px;height:1.00px;background:#606060"></div>
<div class="b" style="left:0.00px;top:535.10px;width:58.60px;height:1.00px;background:#606060"></div>
<div class="b" style="left:0.00px;top:548.25px;width:58.60px;height:1.00px;background:#606060"></div>
<div class="b" style="left:0.00px;top:561.60px;width:58.60px;height:1.00px;background:#606060"></div>
<div class="b" style="left:57.90px;top:118.60px;width:1.50px;height:443.50px;background:#6a6a6a"></div>
<div class="b" style="left:0.00px;top:131.00px;width:702.50px;height:1.60px;background:#a2a2a2"></div>
<div class="b" style="left:58.00px;top:131.00px;width:1.20px;height:1.60px;background:#707070"></div>
<div class="b" style="left:65.00px;top:131.00px;width:1.20px;height:1.60px;background:#707070"></div>
<div class="b" style="left:275.15px;top:131.00px;width:1.20px;height:1.60px;background:#707070"></div>
<div class="b" style="left:303.90px;top:131.00px;width:1.20px;height:1.60px;background:#707070"></div>
<div class="b" style="left:365.50px;top:131.00px;width:1.20px;height:1.60px;background:#707070"></div>
<div class="b" style="left:422.90px;top:131.00px;width:1.20px;height:1.60px;background:#707070"></div>
<div class="b" style="left:454.65px;top:131.00px;width:1.20px;height:1.60px;background:#707070"></div>
<div class="b" style="left:486.90px;top:131.00px;width:1.20px;height:1.60px;background:#707070"></div>
<div class="b" style="left:545.15px;top:131.00px;width:1.20px;height:1.60px;background:#707070"></div>
<div class="b" style="left:602.15px;top:131.00px;width:1.20px;height:1.60px;background:#707070"></div>
<div class="b" style="left:623.90px;top:131.00px;width:1.20px;height:1.60px;background:#707070"></div>
<div class="b" style="left:652.50px;top:131.00px;width:1.20px;height:1.60px;background:#707070"></div>
<div class="b" style="left:701.90px;top:131.00px;width:1.20px;height:1.60px;background:#707070"></div>
<svg style="left:1px;top:133.4px" width="10" height="10" viewBox="0 0 10 10"><path d="M0.4 9L0.9 6.4L6.6 0.7L8.8 2.9L3.1 8.6Z" fill="#f4d47c" stroke="#c08838" stroke-width="0.55"/><path d="M0.4 9L0.9 6.4L3.1 8.6Z" fill="#b07a40"/><path d="M6.6 0.7L8.8 2.9L9.3 2.3L7.2 0.2Z" fill="#e8a070"/><circle cx="6.9" cy="7.1" r="2" fill="#e8f8e0" stroke="#40a040" stroke-width="1"/></svg>
<div class="t" style="left:13.60px;top:133.00px;font-size:6.5px;color:#555;font-family:'Liberation Sans', sans-serif;transform:scaleX(1.0600);letter-spacing:0.126px;">**</div>
<svg style="left:1px;top:147.1px" width="10" height="10" viewBox="0 0 10 10"><path d="M0.4 9L0.9 6.4L6.6 0.7L8.8 2.9L3.1 8.6Z" fill="#f4d47c" stroke="#c08838" stroke-width="0.55"/><path d="M0.4 9L0.9 6.4L3.1 8.6Z" fill="#b07a40"/><path d="M6.6 0.7L8.8 2.9L9.3 2.3L7.2 0.2Z" fill="#e8a070"/><circle cx="6.9" cy="7.1" r="2" fill="#e8f8e0" stroke="#40a040" stroke-width="1"/></svg>
<div class="t" style="left:13.60px;top:147.00px;font-size:6.5px;color:#555;font-family:'Liberation Sans', sans-serif;transform:scaleX(1.0600);letter-spacing:0.126px;">**</div>
<svg style="left:1px;top:160.5px" width="10" height="10" viewBox="0 0 10 10"><path d="M0.4 9L0.9 6.4L6.6 0.7L8.8 2.9L3.1 8.6Z" fill="#f4d47c" stroke="#c08838" stroke-width="0.55"/><path d="M0.4 9L0.9 6.4L3.1 8.6Z" fill="#b07a40"/><path d="M6.6 0.7L8.8 2.9L9.3 2.3L7.2 0.2Z" fill="#e8a070"/><circle cx="6.9" cy="7.1" r="2" fill="#e8f8e0" stroke="#40a040" stroke-width="1"/></svg>
<div class="t" style="left:13.60px;top:160.00px;font-size:6.5px;color:#555;font-family:'Liberation Sans', sans-serif;transform:scaleX(1.0600);letter-spacing:0.126px;">**</div>
<svg style="left:1px;top:173.75px" width="10" height="10" viewBox="0 0 10 10"><path d="M0.4 9L0.9 6.4L6.6 0.7L8.8 2.9L3.1 8.6Z" fill="#f4d47c" stroke="#c08838" stroke-width="0.55"/><path d="M0.4 9L0.9 6.4L3.1 8.6Z" fill="#b07a40"/><path d="M6.6 0.7L8.8 2.9L9.3 2.3L7.2 0.2Z" fill="#e8a070"/><circle cx="6.9" cy="7.1" r="2" fill="#e8f8e0" stroke="#40a040" stroke-width="1"/></svg>
<div class="t" style="left:14.75px;top:173.00px;font-size:6px;color:#404040;font-family:'Liberation Sans', sans-serif;font-weight:bold;transform:scaleX(1.0144);">Recette</div>
<svg style="left:1px;top:187.4px" width="10" height="10" viewBox="0 0 10 10"><path d="M0.4 9L0.9 6.4L6.6 0.7L8.8 2.9L3.1 8.6Z" fill="#f4d47c" stroke="#c08838" stroke-width="0.55"/><path d="M0.4 9L0.9 6.4L3.1 8.6Z" fill="#b07a40"/><path d="M6.6 0.7L8.8 2.9L9.3 2.3L7.2 0.2Z" fill="#e8a070"/><circle cx="6.9" cy="7.1" r="2" fill="#e8f8e0" stroke="#40a040" stroke-width="1"/></svg>
<div class="t" style="left:13.60px;top:187.00px;font-size:6.5px;color:#555;font-family:'Liberation Sans', sans-serif;transform:scaleX(1.0600);letter-spacing:0.126px;">**</div>
<svg style="left:1px;top:200.5px" width="10" height="10" viewBox="0 0 10 10"><path d="M0.4 9L0.9 6.4L6.6 0.7L8.8 2.9L3.1 8.6Z" fill="#f4d47c" stroke="#c08838" stroke-width="0.55"/><path d="M0.4 9L0.9 6.4L3.1 8.6Z" fill="#b07a40"/><path d="M6.6 0.7L8.8 2.9L9.3 2.3L7.2 0.2Z" fill="#e8a070"/><circle cx="6.9" cy="7.1" r="2" fill="#e8f8e0" stroke="#40a040" stroke-width="1"/></svg>
<svg style="left:1px;top:214px" width="10" height="10" viewBox="0 0 10 10"><path d="M0.4 9L0.9 6.4L6.6 0.7L8.8 2.9L3.1 8.6Z" fill="#f4d47c" stroke="#c08838" stroke-width="0.55"/><path d="M0.4 9L0.9 6.4L3.1 8.6Z" fill="#b07a40"/><path d="M6.6 0.7L8.8 2.9L9.3 2.3L7.2 0.2Z" fill="#e8a070"/><circle cx="6.9" cy="7.1" r="2" fill="#e8f8e0" stroke="#40a040" stroke-width="1"/></svg>
<svg style="left:1px;top:227.5px" width="10" height="10" viewBox="0 0 10 10"><path d="M0.4 9L0.9 6.4L6.6 0.7L8.8 2.9L3.1 8.6Z" fill="#f4d47c" stroke="#c08838" stroke-width="0.55"/><path d="M0.4 9L0.9 6.4L3.1 8.6Z" fill="#b07a40"/><path d="M6.6 0.7L8.8 2.9L9.3 2.3L7.2 0.2Z" fill="#e8a070"/><circle cx="6.9" cy="7.1" r="2" fill="#e8f8e0" stroke="#40a040" stroke-width="1"/></svg>
<svg style="left:1px;top:240.5px" width="10" height="10" viewBox="0 0 10 10"><path d="M0.4 9L0.9 6.4L6.6 0.7L8.8 2.9L3.1 8.6Z" fill="#f4d47c" stroke="#c08838" stroke-width="0.55"/><path d="M0.4 9L0.9 6.4L3.1 8.6Z" fill="#b07a40"/><path d="M6.6 0.7L8.8 2.9L9.3 2.3L7.2 0.2Z" fill="#e8a070"/><circle cx="6.9" cy="7.1" r="2" fill="#e8f8e0" stroke="#40a040" stroke-width="1"/></svg>
<svg style="left:1px;top:253.9px" width="10" height="10" viewBox="0 0 10 10"><path d="M0.4 9L0.9 6.4L6.6 0.7L8.8 2.9L3.1 8.6Z" fill="#f4d47c" stroke="#c08838" stroke-width="0.55"/><path d="M0.4 9L0.9 6.4L3.1 8.6Z" fill="#b07a40"/><path d="M6.6 0.7L8.8 2.9L9.3 2.3L7.2 0.2Z" fill="#e8a070"/><circle cx="6.9" cy="7.1" r="2" fill="#e8f8e0" stroke="#40a040" stroke-width="1"/></svg>
<svg style="left:1px;top:266.9px" width="8" height="8" viewBox="0 0 8 8"><rect x="0.4" y="0.4" width="6.4" height="7" fill="#e8ebef" stroke="#a0a6ae" stroke-width="0.6"/><rect x="1.3" y="1.3" width="4.6" height="1.8" fill="#9fb6d0"/><path d="M1.5 4.5H5.5M1.5 6H5.5" stroke="#c0c4cc" stroke-width="0.6"/></svg>
<div class="t" style="left:14.75px;top:266.00px;font-size:6px;color:#404040;font-family:'Liberation Sans', sans-serif;font-weight:bold;transform:scaleX(0.9418);">S.Tot N2</div>
<svg style="left:1px;top:280.1px" width="10" height="10" viewBox="0 0 10 10"><path d="M0.4 9L0.9 6.4L6.6 0.7L8.8 2.9L3.1 8.6Z" fill="#f4d47c" stroke="#c08838" stroke-width="0.55"/><path d="M0.4 9L0.9 6.4L3.1 8.6Z" fill="#b07a40"/><path d="M6.6 0.7L8.8 2.9L9.3 2.3L7.2 0.2Z" fill="#e8a070"/><circle cx="6.9" cy="7.1" r="2" fill="#e8f8e0" stroke="#40a040" stroke-width="1"/></svg>
<svg style="left:1px;top:293.9px" width="10" height="10" viewBox="0 0 10 10"><path d="M0.4 9L0.9 6.4L6.6 0.7L8.8 2.9L3.1 8.6Z" fill="#f4d47c" stroke="#c08838" stroke-width="0.55"/><path d="M0.4 9L0.9 6.4L3.1 8.6Z" fill="#b07a40"/><path d="M6.6 0.7L8.8 2.9L9.3 2.3L7.2 0.2Z" fill="#e8a070"/><circle cx="6.9" cy="7.1" r="2" fill="#e8f8e0" stroke="#40a040" stroke-width="1"/></svg>
<div class="t" style="left:13.60px;top:293.00px;font-size:6.5px;color:#555;font-family:'Liberation Sans', sans-serif;transform:scaleX(1.0600);letter-spacing:0.126px;">**</div>
<svg style="left:1px;top:307.4px" width="10" height="10" viewBox="0 0 10 10"><path d="M0.4 9L0.9 6.4L6.6 0.7L8.8 2.9L3.1 8.6Z" fill="#f4d47c" stroke="#c08838" stroke-width="0.55"/><path d="M0.4 9L0.9 6.4L3.1 8.6Z" fill="#b07a40"/><path d="M6.6 0.7L8.8 2.9L9.3 2.3L7.2 0.2Z" fill="#e8a070"/><circle cx="6.9" cy="7.1" r="2" fill="#e8f8e0" stroke="#40a040" stroke-width="1"/></svg>
<svg style="left:1px;top:324.75px" width="10" height="10" viewBox="0 0 10 10"><path d="M0.4 9L0.9 6.4L6.6 0.7L8.8 2.9L3.1 8.6Z" fill="#f4d47c" stroke="#c08838" stroke-width="0.55"/><path d="M0.4 9L0.9 6.4L3.1 8.6Z" fill="#b07a40"/><path d="M6.6 0.7L8.8 2.9L9.3 2.3L7.2 0.2Z" fill="#e8a070"/><circle cx="6.9" cy="7.1" r="2" fill="#e8f8e0" stroke="#40a040" stroke-width="1"/></svg>
<svg style="left:1px;top:342.6px" width="10" height="10" viewBox="0 0 10 10"><path d="M0.4 9L0.9 6.4L6.6 0.7L8.8 2.9L3.1 8.6Z" fill="#f4d47c" stroke="#c08838" stroke-width="0.55"/><path d="M0.4 9L0.9 6.4L3.1 8.6Z" fill="#b07a40"/><path d="M6.6 0.7L8.8 2.9L9.3 2.3L7.2 0.2Z" fill="#e8a070"/><circle cx="6.9" cy="7.1" r="2" fill="#e8f8e0" stroke="#40a040" stroke-width="1"/></svg>
<svg style="left:1px;top:360.1px" width="10" height="10" viewBox="0 0 10 10"><path d="M0.4 9L0.9 6.4L6.6 0.7L8.8 2.9L3.1 8.6Z" fill="#f4d47c" stroke="#c08838" stroke-width="0.55"/><path d="M0.4 9L0.9 6.4L3.1 8.6Z" fill="#b07a40"/><path d="M6.6 0.7L8.8 2.9L9.3 2.3L7.2 0.2Z" fill="#e8a070"/><circle cx="6.9" cy="7.1" r="2" fill="#e8f8e0" stroke="#40a040" stroke-width="1"/></svg>
<svg style="left:1px;top:377.5px" width="10" height="10" viewBox="0 0 10 10"><path d="M0.4 9L0.9 6.4L6.6 0.7L8.8 2.9L3.1 8.6Z" fill="#f4d47c" stroke="#c08838" stroke-width="0.55"/><path d="M0.4 9L0.9 6.4L3.1 8.6Z" fill="#b07a40"/><path d="M6.6 0.7L8.8 2.9L9.3 2.3L7.2 0.2Z" fill="#e8a070"/><circle cx="6.9" cy="7.1" r="2" fill="#ffe8c0" stroke="#e07820" stroke-width="1"/></svg>
<div class="t" style="left:14.75px;top:376.00px;font-size:6px;color:#404040;font-family:'Liberation Sans', sans-serif;font-weight:bold;transform:scaleX(0.8795);">Dépense</div>
<svg style="left:1px;top:391.25px" width="10" height="10" viewBox="0 0 10 10"><path d="M0.4 9L0.9 6.4L6.6 0.7L8.8 2.9L3.1 8.6Z" fill="#f4d47c" stroke="#c08838" stroke-width="0.55"/><path d="M0.4 9L0.9 6.4L3.1 8.6Z" fill="#b07a40"/><path d="M6.6 0.7L8.8 2.9L9.3 2.3L7.2 0.2Z" fill="#e8a070"/><circle cx="6.9" cy="7.1" r="2" fill="#ffe8c0" stroke="#e07820" stroke-width="1"/></svg>
<div class="t" style="left:14.75px;top:390.00px;font-size:6px;color:#404040;font-family:'Liberation Sans', sans-serif;font-weight:bold;transform:scaleX(0.8795);">Dépense</div>
<svg style="left:1px;top:404.5px" width="10" height="10" viewBox="0 0 10 10"><path d="M0.4 9L0.9 6.4L6.6 0.7L8.8 2.9L3.1 8.6Z" fill="#f4d47c" stroke="#c08838" stroke-width="0.55"/><path d="M0.4 9L0.9 6.4L3.1 8.6Z" fill="#b07a40"/><path d="M6.6 0.7L8.8 2.9L9.3 2.3L7.2 0.2Z" fill="#e8a070"/><circle cx="6.9" cy="7.1" r="2" fill="#ffe8c0" stroke="#e07820" stroke-width="1"/></svg>
<div class="t" style="left:14.75px;top:403.00px;font-size:6px;color:#404040;font-family:'Liberation Sans', sans-serif;font-weight:bold;transform:scaleX(0.8795);">Dépense</div>
<svg style="left:1px;top:417.5px" width="10" height="10" viewBox="0 0 10 10"><path d="M0.4 9L0.9 6.4L6.6 0.7L8.8 2.9L3.1 8.6Z" fill="#f4d47c" stroke="#c08838" stroke-width="0.55"/><path d="M0.4 9L0.9 6.4L3.1 8.6Z" fill="#b07a40"/><path d="M6.6 0.7L8.8 2.9L9.3 2.3L7.2 0.2Z" fill="#e8a070"/><circle cx="6.9" cy="7.1" r="2" fill="#ffe8c0" stroke="#e07820" stroke-width="1"/></svg>
<div class="t" style="left:14.75px;top:416.00px;font-size:6px;color:#404040;font-family:'Liberation Sans', sans-serif;font-weight:bold;transform:scaleX(0.8795);">Dépense</div>
<svg style="left:1px;top:431.1px" width="10" height="10" viewBox="0 0 10 10"><path d="M0.4 9L0.9 6.4L6.6 0.7L8.8 2.9L3.1 8.6Z" fill="#f4d47c" stroke="#c08838" stroke-width="0.55"/><path d="M0.4 9L0.9 6.4L3.1 8.6Z" fill="#b07a40"/><path d="M6.6 0.7L8.8 2.9L9.3 2.3L7.2 0.2Z" fill="#e8a070"/><circle cx="6.9" cy="7.1" r="2" fill="#ffe8c0" stroke="#e07820" stroke-width="1"/></svg>
<div class="t" style="left:14.75px;top:430.00px;font-size:6px;color:#404040;font-family:'Liberation Sans', sans-serif;font-weight:bold;transform:scaleX(0.8795);">Dépense</div>
<svg style="left:1px;top:444.4px" width="10" height="10" viewBox="0 0 10 10"><path d="M0.4 9L0.9 6.4L6.6 0.7L8.8 2.9L3.1 8.6Z" fill="#f4d47c" stroke="#c08838" stroke-width="0.55"/><path d="M0.4 9L0.9 6.4L3.1 8.6Z" fill="#b07a40"/><path d="M6.6 0.7L8.8 2.9L9.3 2.3L7.2 0.2Z" fill="#e8a070"/><circle cx="6.9" cy="7.1" r="2" fill="#ffe8c0" stroke="#e07820" stroke-width="1"/></svg>
<div class="t" style="left:14.75px;top:443.00px;font-size:6px;color:#404040;font-family:'Liberation Sans', sans-serif;font-weight:bold;transform:scaleX(0.8795);">Dépense</div>
<svg style="left:1px;top:457.75px" width="10" height="10" viewBox="0 0 10 10"><path d="M0.4 9L0.9 6.4L6.6 0.7L8.8 2.9L3.1 8.6Z" fill="#f4d47c" stroke="#c08838" stroke-width="0.55"/><path d="M0.4 9L0.9 6.4L3.1 8.6Z" fill="#b07a40"/><path d="M6.6 0.7L8.8 2.9L9.3 2.3L7.2 0.2Z" fill="#e8a070"/><circle cx="6.9" cy="7.1" r="2" fill="#ffe8c0" stroke="#e07820" stroke-width="1"/></svg>
<div class="t" style="left:14.75px;top:457.00px;font-size:6px;color:#404040;font-family:'Liberation Sans', sans-serif;font-weight:bold;transform:scaleX(0.8795);">Dépense</div>
<svg style="left:1px;top:471.1px" width="10" height="10" viewBox="0 0 10 10"><path d="M0.4 9L0.9 6.4L6.6 0.7L8.8 2.9L3.1 8.6Z" fill="#f4d47c" stroke="#c08838" stroke-width="0.55"/><path d="M0.4 9L0.9 6.4L3.1 8.6Z" fill="#b07a40"/><path d="M6.6 0.7L8.8 2.9L9.3 2.3L7.2 0.2Z" fill="#e8a070"/><circle cx="6.9" cy="7.1" r="2" fill="#ffe8c0" stroke="#e07820" stroke-width="1"/></svg>
<div class="t" style="left:14.75px;top:470.00px;font-size:6px;color:#404040;font-family:'Liberation Sans', sans-serif;font-weight:bold;transform:scaleX(0.8795);">Dépense</div>
<svg style="left:1px;top:484.4px" width="10" height="10" viewBox="0 0 10 10"><path d="M0.4 9L0.9 6.4L6.6 0.7L8.8 2.9L3.1 8.6Z" fill="#f4d47c" stroke="#c08838" stroke-width="0.55"/><path d="M0.4 9L0.9 6.4L3.1 8.6Z" fill="#b07a40"/><path d="M6.6 0.7L8.8 2.9L9.3 2.3L7.2 0.2Z" fill="#e8a070"/><circle cx="6.9" cy="7.1" r="2" fill="#ffe8c0" stroke="#e07820" stroke-width="1"/></svg>
<div class="t" style="left:14.75px;top:483.00px;font-size:6px;color:#404040;font-family:'Liberation Sans', sans-serif;font-weight:bold;transform:scaleX(0.8795);">Dépense</div>
<svg style="left:1px;top:497.6px" width="10" height="10" viewBox="0 0 10 10"><path d="M0.4 9L0.9 6.4L6.6 0.7L8.8 2.9L3.1 8.6Z" fill="#f4d47c" stroke="#c08838" stroke-width="0.55"/><path d="M0.4 9L0.9 6.4L3.1 8.6Z" fill="#b07a40"/><path d="M6.6 0.7L8.8 2.9L9.3 2.3L7.2 0.2Z" fill="#e8a070"/><circle cx="6.9" cy="7.1" r="2" fill="#ffe8c0" stroke="#e07820" stroke-width="1"/></svg>
<div class="t" style="left:14.75px;top:497.00px;font-size:6px;color:#404040;font-family:'Liberation Sans', sans-serif;font-weight:bold;transform:scaleX(0.8795);">Dépense</div>
<svg style="left:1px;top:511.1px" width="10" height="10" viewBox="0 0 10 10"><path d="M0.4 9L0.9 6.4L6.6 0.7L8.8 2.9L3.1 8.6Z" fill="#f4d47c" stroke="#c08838" stroke-width="0.55"/><path d="M0.4 9L0.9 6.4L3.1 8.6Z" fill="#b07a40"/><path d="M6.6 0.7L8.8 2.9L9.3 2.3L7.2 0.2Z" fill="#e8a070"/><circle cx="6.9" cy="7.1" r="2" fill="#ffe8c0" stroke="#e07820" stroke-width="1"/></svg>
<div class="t" style="left:14.75px;top:510.00px;font-size:6px;color:#404040;font-family:'Liberation Sans', sans-serif;font-weight:bold;transform:scaleX(0.8795);">Dépense</div>
<svg style="left:1px;top:524.0px" width="8" height="8" viewBox="0 0 8 8"><rect x="0.4" y="0.4" width="6.4" height="7" fill="#e8ebef" stroke="#a0a6ae" stroke-width="0.6"/><rect x="1.3" y="1.3" width="4.6" height="1.8" fill="#9fb6d0"/><path d="M1.5 4.5H5.5M1.5 6H5.5" stroke="#c0c4cc" stroke-width="0.6"/></svg>
<div class="t" style="left:14.75px;top:523.00px;font-size:6px;color:#404040;font-family:'Liberation Sans', sans-serif;font-weight:bold;transform:scaleX(0.9418);">S.Tot N1</div>
<svg style="left:1px;top:537.6px" width="10" height="10" viewBox="0 0 10 10"><path d="M0.4 9L0.9 6.4L6.6 0.7L8.8 2.9L3.1 8.6Z" fill="#f4d47c" stroke="#c08838" stroke-width="0.55"/><path d="M0.4 9L0.9 6.4L3.1 8.6Z" fill="#b07a40"/><path d="M6.6 0.7L8.8 2.9L9.3 2.3L7.2 0.2Z" fill="#e8a070"/><circle cx="6.9" cy="7.1" r="2" fill="#ffe8c0" stroke="#e07820" stroke-width="1"/></svg>
<div class="t" style="left:14.75px;top:537.00px;font-size:6px;color:#404040;font-family:'Liberation Sans', sans-serif;font-weight:bold;transform:scaleX(0.8795);">Dépense</div>
<svg style="left:1px;top:550.75px" width="10" height="10" viewBox="0 0 10 10"><path d="M0.4 9L0.9 6.4L6.6 0.7L8.8 2.9L3.1 8.6Z" fill="#f4d47c" stroke="#c08838" stroke-width="0.55"/><path d="M0.4 9L0.9 6.4L3.1 8.6Z" fill="#b07a40"/><path d="M6.6 0.7L8.8 2.9L9.3 2.3L7.2 0.2Z" fill="#e8a070"/><circle cx="6.9" cy="7.1" r="2" fill="#ffe8c0" stroke="#e07820" stroke-width="1"/></svg>
<div class="t" style="left:14.75px;top:550.00px;font-size:6px;color:#404040;font-family:'Liberation Sans', sans-serif;font-weight:bold;transform:scaleX(0.8795);">Dépense</div>
<div class="t" style="left:66.25px;top:175.00px;font-size:7.8px;color:#0a0a0a;font-family:'Liberation Sans', sans-serif;font-weight:bold;transform:scaleX(0.8769);-webkit-text-stroke:0.1px currentColor;">RECETTES:</div>
<div class="t" style="left:66.00px;top:200.00px;font-size:7px;color:#1a1a1a;font-family:'Liberation Sans', sans-serif;transform:scaleX(0.8331);-webkit-text-stroke:0.1px currentColor;">SURFACE RESERVEE AU LANCEMENT 20%</div>
<div class="t" style="left:66.00px;top:214.00px;font-size:7px;color:#1a1a1a;font-family:'Liberation Sans', sans-serif;transform:scaleX(0.8287);-webkit-text-stroke:0.1px currentColor;">SURFACE ACTEE MISE HORS D'AIR 50%</div>
<div class="t" style="left:66.00px;top:227.00px;font-size:7px;color:#1a1a1a;font-family:'Liberation Sans', sans-serif;transform:scaleX(0.8342);-webkit-text-stroke:0.1px currentColor;">SURFACE ACTEE A LA LIVRAISON 30%</div>
<div class="t" style="left:66.00px;top:240.00px;font-size:7px;color:#1a1a1a;font-family:'Liberation Sans', sans-serif;transform:scaleX(0.8186);-webkit-text-stroke:0.1px currentColor;">SURFACE SOCIALE</div>
<div class="t" style="left:66.25px;top:267.00px;font-size:7px;color:#0a0a30;font-family:'Liberation Sans', sans-serif;font-weight:bold;text-decoration:underline;transform:scaleX(0.7794);-webkit-text-stroke:0.1px currentColor;">TOTAL RECETTES</div>
<div class="t" style="left:66.25px;top:378.00px;font-size:7.6px;color:#0a0a0a;font-family:'Liberation Sans', sans-serif;font-weight:bold;transform:scaleX(1.0205);-webkit-text-stroke:0.1px currentColor;">Foncier</div>
<div class="t" style="left:77.50px;top:404.00px;font-size:7px;color:#1a1a1a;font-family:'Liberation Sans', sans-serif;transform:scaleX(0.8032);-webkit-text-stroke:0.1px currentColor;">Frais notaire</div>
<div class="t" style="left:77.50px;top:417.00px;font-size:7px;color:#1a1a1a;font-family:'Liberation Sans', sans-serif;transform:scaleX(0.8488);-webkit-text-stroke:0.1px currentColor;">Taxe TLE</div>
<div class="t" style="left:77.50px;top:431.00px;font-size:7px;color:#1a1a1a;font-family:'Liberation Sans', sans-serif;transform:scaleX(0.8428);-webkit-text-stroke:0.1px currentColor;">Taxe CAUE</div>
<div class="t" style="left:77.50px;top:444.00px;font-size:7px;color:#1a1a1a;font-family:'Liberation Sans', sans-serif;transform:scaleX(0.8399);-webkit-text-stroke:0.1px currentColor;">Taxe PLD</div>
<div class="t" style="left:66.25px;top:457.00px;font-size:7.4px;color:#0a0a0a;font-family:'Liberation Sans', sans-serif;font-weight:bold;font-style:italic;transform:scaleX(0.9201);-webkit-text-stroke:0.1px currentColor;">Frais d'huissier</div>
<div class="t" style="left:77.50px;top:471.00px;font-size:7px;color:#1a1a1a;font-family:'Liberation Sans', sans-serif;transform:scaleX(0.7682);-webkit-text-stroke:0.1px currentColor;">Constat PC</div>
<div class="t" style="left:66.50px;top:484.00px;font-size:7.4px;color:#0a0a0a;font-family:'Liberation Sans', sans-serif;font-weight:bold;font-style:italic;transform:scaleX(0.9126);-webkit-text-stroke:0.1px currentColor;">Géomètre</div>
<div class="t" style="left:77.50px;top:497.00px;font-size:7px;color:#1a1a1a;font-family:'Liberation Sans', sans-serif;transform:scaleX(0.7988);-webkit-text-stroke:0.1px currentColor;">Plan topographique</div>
<div class="t" style="left:77.50px;top:511.00px;font-size:7px;color:#1a1a1a;font-family:'Liberation Sans', sans-serif;transform:scaleX(0.8123);-webkit-text-stroke:0.1px currentColor;">Bornage</div>
<div class="t" style="left:66.25px;top:524.00px;font-size:7px;color:#0a0a30;font-family:'Liberation Sans', sans-serif;font-weight:bold;text-decoration:underline;transform:scaleX(0.7357);-webkit-text-stroke:0.1px currentColor;">Sous total foncier</div>
<div class="t" style="left:66.25px;top:552.00px;font-size:7.7px;color:#0a0a0a;font-family:'Liberation Sans', sans-serif;font-weight:bold;transform:scaleX(0.8470);-webkit-text-stroke:0.1px currentColor;">VRD</div>
<div class="t" style="left:277.00px;top:202.00px;font-size:6.6px;color:#111;font-family:'Liberation Sans', sans-serif;transform:scaleX(0.77);-webkit-text-stroke:0.1px currentColor;">=0</div>
<div class="t" style="left:479.06px;top:202.00px;font-size:6.6px;color:#111;font-family:'Liberation Sans', sans-serif;transform:scaleX(0.77);transform-origin:100% 0;-webkit-text-stroke:0.1px currentColor;">20</div>
<div class="t" style="left:531.41px;top:202.00px;font-size:6.6px;color:#111;font-family:'Liberation Sans', sans-serif;transform:scaleX(0.77);transform-origin:100% 0;-webkit-text-stroke:0.1px currentColor;">0,00</div>
<div class="t" style="left:588.76px;top:202.00px;font-size:6.6px;color:#111;font-family:'Liberation Sans', sans-serif;transform:scaleX(0.77);transform-origin:100% 0;-webkit-text-stroke:0.1px currentColor;">0,00</div>
<div class="t" style="left:277.00px;top:216.00px;font-size:6.6px;color:#111;font-family:'Liberation Sans', sans-serif;transform:scaleX(0.77);-webkit-text-stroke:0.1px currentColor;">=0</div>
<div class="t" style="left:479.06px;top:216.00px;font-size:6.6px;color:#111;font-family:'Liberation Sans', sans-serif;transform:scaleX(0.77);transform-origin:100% 0;-webkit-text-stroke:0.1px currentColor;">20</div>
<div class="t" style="left:531.41px;top:216.00px;font-size:6.6px;color:#111;font-family:'Liberation Sans', sans-serif;transform:scaleX(0.77);transform-origin:100% 0;-webkit-text-stroke:0.1px currentColor;">0,00</div>
<div class="t" style="left:588.76px;top:216.00px;font-size:6.6px;color:#111;font-family:'Liberation Sans', sans-serif;transform:scaleX(0.77);transform-origin:100% 0;-webkit-text-stroke:0.1px currentColor;">0,00</div>
<div class="t" style="left:277.00px;top:229.00px;font-size:6.6px;color:#111;font-family:'Liberation Sans', sans-serif;transform:scaleX(0.77);-webkit-text-stroke:0.1px currentColor;">=0</div>
<div class="t" style="left:348.31px;top:229.00px;font-size:6.6px;color:#111;font-family:'Liberation Sans', sans-serif;transform:scaleX(0.77);transform-origin:100% 0;-webkit-text-stroke:0.1px currentColor;">+0,00</div>
<div class="t" style="left:409.56px;top:229.00px;font-size:6.6px;color:#111;font-family:'Liberation Sans', sans-serif;transform:scaleX(0.77);transform-origin:100% 0;-webkit-text-stroke:0.1px currentColor;">0,00</div>
<div class="t" style="left:450.33px;top:229.00px;font-size:6.6px;color:#111;font-family:'Liberation Sans', sans-serif;transform:scaleX(0.77);transform-origin:100% 0;-webkit-text-stroke:0.1px currentColor;">5</div>
<div class="t" style="left:479.06px;top:229.00px;font-size:6.6px;color:#111;font-family:'Liberation Sans', sans-serif;transform:scaleX(0.77);transform-origin:100% 0;-webkit-text-stroke:0.1px currentColor;">20</div>
<div class="t" style="left:531.41px;top:229.00px;font-size:6.6px;color:#111;font-family:'Liberation Sans', sans-serif;transform:scaleX(0.77);transform-origin:100% 0;-webkit-text-stroke:0.1px currentColor;">0,00</div>
<div class="t" style="left:588.76px;top:229.00px;font-size:6.6px;color:#111;font-family:'Liberation Sans', sans-serif;transform:scaleX(0.77);transform-origin:100% 0;-webkit-text-stroke:0.1px currentColor;">0,00</div>
<div class="t" style="left:277.00px;top:242.00px;font-size:6.6px;color:#111;font-family:'Liberation Sans', sans-serif;transform:scaleX(0.77);-webkit-text-stroke:0.1px currentColor;">=0</div>
<div class="t" style="left:339.33px;top:242.00px;font-size:6.6px;color:#111;font-family:'Liberation Sans', sans-serif;transform:scaleX(0.77);transform-origin:100% 0;-webkit-text-stroke:0.1px currentColor;">4 500,00</div>
<div class="t" style="left:409.56px;top:242.00px;font-size:6.6px;color:#111;font-family:'Liberation Sans', sans-serif;transform:scaleX(0.77);transform-origin:100% 0;-webkit-text-stroke:0.1px currentColor;">0,00</div>
<div class="t" style="left:450.33px;top:242.00px;font-size:6.6px;color:#111;font-family:'Liberation Sans', sans-serif;transform:scaleX(0.77);transform-origin:100% 0;-webkit-text-stroke:0.1px currentColor;">2</div>
<div class="t" style="left:482.73px;top:242.00px;font-size:6.6px;color:#111;font-family:'Liberation Sans', sans-serif;transform:scaleX(0.77);transform-origin:100% 0;-webkit-text-stroke:0.1px currentColor;">7</div>
<div class="t" style="left:531.41px;top:242.00px;font-size:6.6px;color:#111;font-family:'Liberation Sans', sans-serif;transform:scaleX(0.77);transform-origin:100% 0;-webkit-text-stroke:0.1px currentColor;">0,00</div>
<div class="t" style="left:588.76px;top:242.00px;font-size:6.6px;color:#111;font-family:'Liberation Sans', sans-serif;transform:scaleX(0.77);transform-origin:100% 0;-webkit-text-stroke:0.1px currentColor;">0,00</div>
<div class="t" style="left:277.00px;top:393.00px;font-size:6.6px;color:#111;font-family:'Liberation Sans', sans-serif;transform:scaleX(0.77);-webkit-text-stroke:0.1px currentColor;">1</div>
<div class="t" style="left:331.98px;top:393.00px;font-size:6.6px;color:#111;font-family:'Liberation Sans', sans-serif;transform:scaleX(0.77);transform-origin:100% 0;-webkit-text-stroke:0.1px currentColor;">500 000,00</div>
<div class="t" style="left:389.38px;top:393.00px;font-size:6.6px;color:#111;font-family:'Liberation Sans', sans-serif;transform:scaleX(0.77);transform-origin:100% 0;-webkit-text-stroke:0.1px currentColor;">500 000,00</div>
<div class="t" style="left:450.33px;top:393.00px;font-size:6.6px;color:#111;font-family:'Liberation Sans', sans-serif;transform:scaleX(0.77);transform-origin:100% 0;-webkit-text-stroke:0.1px currentColor;">5</div>
<div class="t" style="left:479.06px;top:393.00px;font-size:6.6px;color:#111;font-family:'Liberation Sans', sans-serif;transform:scaleX(0.77);transform-origin:100% 0;-webkit-text-stroke:0.1px currentColor;">20</div>
<div class="t" style="left:511.23px;top:393.00px;font-size:6.6px;color:#111;font-family:'Liberation Sans', sans-serif;transform:scaleX(0.77);transform-origin:100% 0;-webkit-text-stroke:0.1px currentColor;">100 000,00</div>
<div class="t" style="left:568.58px;top:393.00px;font-size:6.6px;color:#111;font-family:'Liberation Sans', sans-serif;transform:scaleX(0.77);transform-origin:100% 0;-webkit-text-stroke:0.1px currentColor;">600 000,00</div>
<div class="t" style="left:602.58px;top:393.00px;font-size:6.6px;color:#111;font-family:'Liberation Sans', sans-serif;transform:scaleX(0.77);transform-origin:100% 0;-webkit-text-stroke:0.1px currentColor;">41,79..</div>
<div class="t" style="left:618.80px;top:393.00px;font-size:6.6px;color:#111;font-family:'Liberation Sans', sans-serif;transform:scaleX(0.77);transform-origin:100% 0;-webkit-text-stroke:0.1px currentColor;">500 000,0..</div>
<div class="t" style="left:277.00px;top:406.00px;font-size:6.6px;color:#111;font-family:'Liberation Sans', sans-serif;transform:scaleX(0.77);-webkit-text-stroke:0.1px currentColor;">1</div>
<div class="t" style="left:393.06px;top:406.00px;font-size:6.6px;color:#111;font-family:'Liberation Sans', sans-serif;transform:scaleX(0.77);transform-origin:100% 0;-webkit-text-stroke:0.1px currentColor;">17 500,00</div>
<div class="t" style="left:450.33px;top:406.00px;font-size:6.6px;color:#111;font-family:'Liberation Sans', sans-serif;transform:scaleX(0.77);transform-origin:100% 0;-webkit-text-stroke:0.1px currentColor;">5</div>
<div class="t" style="left:479.06px;top:406.00px;font-size:6.6px;color:#111;font-family:'Liberation Sans', sans-serif;transform:scaleX(0.77);transform-origin:100% 0;-webkit-text-stroke:0.1px currentColor;">20</div>
<div class="t" style="left:518.58px;top:406.00px;font-size:6.6px;color:#111;font-family:'Liberation Sans', sans-serif;transform:scaleX(0.77);transform-origin:100% 0;-webkit-text-stroke:0.1px currentColor;">3 500,00</div>
<div class="t" style="left:572.26px;top:406.00px;font-size:6.6px;color:#111;font-family:'Liberation Sans', sans-serif;transform:scaleX(0.77);transform-origin:100% 0;-webkit-text-stroke:0.1px currentColor;">21 000,00</div>
<div class="t" style="left:604.05px;top:406.00px;font-size:6.6px;color:#111;font-family:'Liberation Sans', sans-serif;transform:scaleX(0.77);transform-origin:100% 0;-webkit-text-stroke:0.1px currentColor;">1,46%</div>
<div class="t" style="left:622.46px;top:406.00px;font-size:6.6px;color:#111;font-family:'Liberation Sans', sans-serif;transform:scaleX(0.77);transform-origin:100% 0;-webkit-text-stroke:0.1px currentColor;">17 500,00</div>
<div class="t" style="left:277.00px;top:419.00px;font-size:6.6px;color:#111;font-family:'Liberation Sans', sans-serif;transform:scaleX(0.77);-webkit-text-stroke:0.1px currentColor;">1</div>
<div class="t" style="left:339.33px;top:419.00px;font-size:6.6px;color:#111;font-family:'Liberation Sans', sans-serif;transform:scaleX(0.77);transform-origin:100% 0;-webkit-text-stroke:0.1px currentColor;">3 000,00</div>
<div class="t" style="left:396.73px;top:419.00px;font-size:6.6px;color:#111;font-family:'Liberation Sans', sans-serif;transform:scaleX(0.77);transform-origin:100% 0;-webkit-text-stroke:0.1px currentColor;">3 000,00</div>
<div class="t" style="left:450.33px;top:419.00px;font-size:6.6px;color:#111;font-family:'Liberation Sans', sans-serif;transform:scaleX(0.77);transform-origin:100% 0;-webkit-text-stroke:0.1px currentColor;">4</div>
<div class="t" style="left:473.56px;top:419.00px;font-size:6.6px;color:#111;font-family:'Liberation Sans', sans-serif;transform:scaleX(0.77);transform-origin:100% 0;-webkit-text-stroke:0.1px currentColor;">0,00</div>
<div class="t" style="left:531.41px;top:419.00px;font-size:6.6px;color:#111;font-family:'Liberation Sans', sans-serif;transform:scaleX(0.77);transform-origin:100% 0;-webkit-text-stroke:0.1px currentColor;">0,00</div>
<div class="t" style="left:575.93px;top:419.00px;font-size:6.6px;color:#111;font-family:'Liberation Sans', sans-serif;transform:scaleX(0.77);transform-origin:100% 0;-webkit-text-stroke:0.1px currentColor;">3 000,00</div>
<div class="t" style="left:604.05px;top:419.00px;font-size:6.6px;color:#111;font-family:'Liberation Sans', sans-serif;transform:scaleX(0.77);transform-origin:100% 0;-webkit-text-stroke:0.1px currentColor;">0,25%</div>
<div class="t" style="left:626.13px;top:419.00px;font-size:6.6px;color:#111;font-family:'Liberation Sans', sans-serif;transform:scaleX(0.77);transform-origin:100% 0;-webkit-text-stroke:0.1px currentColor;">3 000,00</div>
<div class="t" style="left:688.41px;top:419.00px;font-size:6.6px;color:#111;font-family:'Liberation Sans', sans-serif;transform:scaleX(0.77);transform-origin:100% 0;-webkit-text-stroke:0.1px currentColor;">0,00</div>
<div class="t" style="left:277.00px;top:433.00px;font-size:6.6px;color:#111;font-family:'Liberation Sans', sans-serif;transform:scaleX(0.77);-webkit-text-stroke:0.1px currentColor;">1</div>
<div class="t" style="left:339.33px;top:433.00px;font-size:6.6px;color:#111;font-family:'Liberation Sans', sans-serif;transform:scaleX(0.77);transform-origin:100% 0;-webkit-text-stroke:0.1px currentColor;">1 900,00</div>
<div class="t" style="left:396.73px;top:433.00px;font-size:6.6px;color:#111;font-family:'Liberation Sans', sans-serif;transform:scaleX(0.77);transform-origin:100% 0;-webkit-text-stroke:0.1px currentColor;">1 900,00</div>
<div class="t" style="left:450.33px;top:433.00px;font-size:6.6px;color:#111;font-family:'Liberation Sans', sans-serif;transform:scaleX(0.77);transform-origin:100% 0;-webkit-text-stroke:0.1px currentColor;">4</div>
<div class="t" style="left:473.56px;top:433.00px;font-size:6.6px;color:#111;font-family:'Liberation Sans', sans-serif;transform:scaleX(0.77);transform-origin:100% 0;-webkit-text-stroke:0.1px currentColor;">0,00</div>
<div class="t" style="left:531.41px;top:433.00px;font-size:6.6px;color:#111;font-family:'Liberation Sans', sans-serif;transform:scaleX(0.77);transform-origin:100% 0;-webkit-text-stroke:0.1px currentColor;">0,00</div>
<div class="t" style="left:575.93px;top:433.00px;font-size:6.6px;color:#111;font-family:'Liberation Sans', sans-serif;transform:scaleX(0.77);transform-origin:100% 0;-webkit-text-stroke:0.1px currentColor;">1 900,00</div>
<div class="t" style="left:604.05px;top:433.00px;font-size:6.6px;color:#111;font-family:'Liberation Sans', sans-serif;transform:scaleX(0.77);transform-origin:100% 0;-webkit-text-stroke:0.1px currentColor;">0,16%</div>
<div class="t" style="left:626.13px;top:433.00px;font-size:6.6px;color:#111;font-family:'Liberation Sans', sans-serif;transform:scaleX(0.77);transform-origin:100% 0;-webkit-text-stroke:0.1px currentColor;">1 900,00</div>
<div class="t" style="left:688.41px;top:433.00px;font-size:6.6px;color:#111;font-family:'Liberation Sans', sans-serif;transform:scaleX(0.77);transform-origin:100% 0;-webkit-text-stroke:0.1px currentColor;">0,00</div>
<div class="t" style="left:277.00px;top:446.00px;font-size:6.6px;color:#111;font-family:'Liberation Sans', sans-serif;transform:scaleX(0.77);-webkit-text-stroke:0.1px currentColor;">1</div>
<div class="t" style="left:339.33px;top:446.00px;font-size:6.6px;color:#111;font-family:'Liberation Sans', sans-serif;transform:scaleX(0.77);transform-origin:100% 0;-webkit-text-stroke:0.1px currentColor;">1 890,00</div>
<div class="t" style="left:396.73px;top:446.00px;font-size:6.6px;color:#111;font-family:'Liberation Sans', sans-serif;transform:scaleX(0.77);transform-origin:100% 0;-webkit-text-stroke:0.1px currentColor;">1 890,00</div>
<div class="t" style="left:450.33px;top:446.00px;font-size:6.6px;color:#111;font-family:'Liberation Sans', sans-serif;transform:scaleX(0.77);transform-origin:100% 0;-webkit-text-stroke:0.1px currentColor;">4</div>
<div class="t" style="left:473.56px;top:446.00px;font-size:6.6px;color:#111;font-family:'Liberation Sans', sans-serif;transform:scaleX(0.77);transform-origin:100% 0;-webkit-text-stroke:0.1px currentColor;">0,00</div>
<div class="t" style="left:531.41px;top:446.00px;font-size:6.6px;color:#111;font-family:'Liberation Sans', sans-serif;transform:scaleX(0.77);transform-origin:100% 0;-webkit-text-stroke:0.1px currentColor;">0,00</div>
<div class="t" style="left:575.93px;top:446.00px;font-size:6.6px;color:#111;font-family:'Liberation Sans', sans-serif;transform:scaleX(0.77);transform-origin:100% 0;-webkit-text-stroke:0.1px currentColor;">1 890,00</div>
<div class="t" style="left:604.05px;top:446.00px;font-size:6.6px;color:#111;font-family:'Liberation Sans', sans-serif;transform:scaleX(0.77);transform-origin:100% 0;-webkit-text-stroke:0.1px currentColor;">0,16%</div>
<div class="t" style="left:626.13px;top:446.00px;font-size:6.6px;color:#111;font-family:'Liberation Sans', sans-serif;transform:scaleX(0.77);transform-origin:100% 0;-webkit-text-stroke:0.1px currentColor;">1 890,00</div>
<div class="t" style="left:688.41px;top:446.00px;font-size:6.6px;color:#111;font-family:'Liberation Sans', sans-serif;transform:scaleX(0.77);transform-origin:100% 0;-webkit-text-stroke:0.1px currentColor;">0,00</div>
<div class="t" style="left:277.00px;top:473.00px;font-size:6.6px;color:#111;font-family:'Liberation Sans', sans-serif;transform:scaleX(0.77);-webkit-text-stroke:0.1px currentColor;">1</div>
<div class="t" style="left:344.83px;top:473.00px;font-size:6.6px;color:#111;font-family:'Liberation Sans', sans-serif;transform:scaleX(0.77);transform-origin:100% 0;-webkit-text-stroke:0.1px currentColor;">890,00</div>
<div class="t" style="left:402.23px;top:473.00px;font-size:6.6px;color:#111;font-family:'Liberation Sans', sans-serif;transform:scaleX(0.77);transform-origin:100% 0;-webkit-text-stroke:0.1px currentColor;">890,00</div>
<div class="t" style="left:450.33px;top:473.00px;font-size:6.6px;color:#111;font-family:'Liberation Sans', sans-serif;transform:scaleX(0.77);transform-origin:100% 0;-webkit-text-stroke:0.1px currentColor;">5</div>
<div class="t" style="left:479.06px;top:473.00px;font-size:6.6px;color:#111;font-family:'Liberation Sans', sans-serif;transform:scaleX(0.77);transform-origin:100% 0;-webkit-text-stroke:0.1px currentColor;">20</div>
<div class="t" style="left:524.08px;top:473.00px;font-size:6.6px;color:#111;font-family:'Liberation Sans', sans-serif;transform:scaleX(0.77);transform-origin:100% 0;-webkit-text-stroke:0.1px currentColor;">178,00</div>
<div class="t" style="left:575.93px;top:473.00px;font-size:6.6px;color:#111;font-family:'Liberation Sans', sans-serif;transform:scaleX(0.77);transform-origin:100% 0;-webkit-text-stroke:0.1px currentColor;">1 068,00</div>
<div class="t" style="left:604.05px;top:473.00px;font-size:6.6px;color:#111;font-family:'Liberation Sans', sans-serif;transform:scaleX(0.77);transform-origin:100% 0;-webkit-text-stroke:0.1px currentColor;">0,07%</div>
<div class="t" style="left:631.63px;top:473.00px;font-size:6.6px;color:#111;font-family:'Liberation Sans', sans-serif;transform:scaleX(0.77);transform-origin:100% 0;-webkit-text-stroke:0.1px currentColor;">890,00</div>
<div class="t" style="left:688.41px;top:473.00px;font-size:6.6px;color:#111;font-family:'Liberation Sans', sans-serif;transform:scaleX(0.77);transform-origin:100% 0;-webkit-text-stroke:0.1px currentColor;">0,00</div>
<div class="t" style="left:277.00px;top:499.00px;font-size:6.6px;color:#111;font-family:'Liberation Sans', sans-serif;transform:scaleX(0.77);-webkit-text-stroke:0.1px currentColor;">1</div>
<div class="t" style="left:339.33px;top:499.00px;font-size:6.6px;color:#111;font-family:'Liberation Sans', sans-serif;transform:scaleX(0.77);transform-origin:100% 0;-webkit-text-stroke:0.1px currentColor;">7 864,00</div>
<div class="t" style="left:396.73px;top:499.00px;font-size:6.6px;color:#111;font-family:'Liberation Sans', sans-serif;transform:scaleX(0.77);transform-origin:100% 0;-webkit-text-stroke:0.1px currentColor;">7 864,00</div>
<div class="t" style="left:450.33px;top:499.00px;font-size:6.6px;color:#111;font-family:'Liberation Sans', sans-serif;transform:scaleX(0.77);transform-origin:100% 0;-webkit-text-stroke:0.1px currentColor;">5</div>
<div class="t" style="left:479.06px;top:499.00px;font-size:6.6px;color:#111;font-family:'Liberation Sans', sans-serif;transform:scaleX(0.77);transform-origin:100% 0;-webkit-text-stroke:0.1px currentColor;">20</div>
<div class="t" style="left:518.58px;top:499.00px;font-size:6.6px;color:#111;font-family:'Liberation Sans', sans-serif;transform:scaleX(0.77);transform-origin:100% 0;-webkit-text-stroke:0.1px currentColor;">1 572,80</div>
<div class="t" style="left:575.93px;top:499.00px;font-size:6.6px;color:#111;font-family:'Liberation Sans', sans-serif;transform:scaleX(0.77);transform-origin:100% 0;-webkit-text-stroke:0.1px currentColor;">9 436,80</div>
<div class="t" style="left:604.05px;top:499.00px;font-size:6.6px;color:#111;font-family:'Liberation Sans', sans-serif;transform:scaleX(0.77);transform-origin:100% 0;-webkit-text-stroke:0.1px currentColor;">0,66%</div>
<div class="t" style="left:626.13px;top:499.00px;font-size:6.6px;color:#111;font-family:'Liberation Sans', sans-serif;transform:scaleX(0.77);transform-origin:100% 0;-webkit-text-stroke:0.1px currentColor;">7 864,00</div>
<div class="t" style="left:688.41px;top:499.00px;font-size:6.6px;color:#111;font-family:'Liberation Sans', sans-serif;transform:scaleX(0.77);transform-origin:100% 0;-webkit-text-stroke:0.1px currentColor;">0,00</div>
<div class="t" style="left:277.00px;top:513.00px;font-size:6.6px;color:#111;font-family:'Liberation Sans', sans-serif;transform:scaleX(0.77);-webkit-text-stroke:0.1px currentColor;">1</div>
<div class="t" style="left:352.16px;top:513.00px;font-size:6.6px;color:#111;font-family:'Liberation Sans', sans-serif;transform:scaleX(0.77);transform-origin:100% 0;-webkit-text-stroke:0.1px currentColor;">3,00</div>
<div class="t" style="left:409.56px;top:513.00px;font-size:6.6px;color:#111;font-family:'Liberation Sans', sans-serif;transform:scaleX(0.77);transform-origin:100% 0;-webkit-text-stroke:0.1px currentColor;">3,00</div>
<div class="t" style="left:450.33px;top:513.00px;font-size:6.6px;color:#111;font-family:'Liberation Sans', sans-serif;transform:scaleX(0.77);transform-origin:100% 0;-webkit-text-stroke:0.1px currentColor;">5</div>
<div class="t" style="left:479.06px;top:513.00px;font-size:6.6px;color:#111;font-family:'Liberation Sans', sans-serif;transform:scaleX(0.77);transform-origin:100% 0;-webkit-text-stroke:0.1px currentColor;">20</div>
<div class="t" style="left:531.41px;top:513.00px;font-size:6.6px;color:#111;font-family:'Liberation Sans', sans-serif;transform:scaleX(0.77);transform-origin:100% 0;-webkit-text-stroke:0.1px currentColor;">0,60</div>
<div class="t" style="left:588.76px;top:513.00px;font-size:6.6px;color:#111;font-family:'Liberation Sans', sans-serif;transform:scaleX(0.77);transform-origin:100% 0;-webkit-text-stroke:0.1px currentColor;">3,60</div>
<div class="t" style="left:604.05px;top:513.00px;font-size:6.6px;color:#111;font-family:'Liberation Sans', sans-serif;transform:scaleX(0.77);transform-origin:100% 0;-webkit-text-stroke:0.1px currentColor;">0,00%</div>
<div class="t" style="left:638.96px;top:513.00px;font-size:6.6px;color:#111;font-family:'Liberation Sans', sans-serif;transform:scaleX(0.77);transform-origin:100% 0;-webkit-text-stroke:0.1px currentColor;">3,00</div>
<div class="t" style="left:409.56px;top:269.00px;font-size:6.6px;color:#111;font-family:'Liberation Sans', sans-serif;font-weight:bold;text-decoration:underline;transform:scaleX(0.77);transform-origin:100% 0;-webkit-text-stroke:0.1px currentColor;">0,00</div>
<div class="t" style="left:531.41px;top:269.00px;font-size:6.6px;color:#111;font-family:'Liberation Sans', sans-serif;font-weight:bold;text-decoration:underline;transform:scaleX(0.77);transform-origin:100% 0;-webkit-text-stroke:0.1px currentColor;">0,00</div>
<div class="t" style="left:588.76px;top:269.00px;font-size:6.6px;color:#111;font-family:'Liberation Sans', sans-serif;font-weight:bold;text-decoration:underline;transform:scaleX(0.77);transform-origin:100% 0;-webkit-text-stroke:0.1px currentColor;">0,00</div>
<div class="t" style="left:619.08px;top:269.00px;font-size:6.6px;color:#111;font-family:'Liberation Sans', sans-serif;font-weight:bold;text-decoration:underline;transform:scaleX(0.77);transform-origin:100% 0;-webkit-text-stroke:0.1px currentColor;">0</div>
<div class="t" style="left:638.96px;top:269.00px;font-size:6.6px;color:#111;font-family:'Liberation Sans', sans-serif;font-weight:bold;text-decoration:underline;transform:scaleX(0.77);transform-origin:100% 0;-webkit-text-stroke:0.1px currentColor;">0,00</div>
<div class="t" style="left:688.41px;top:269.00px;font-size:6.6px;color:#111;font-family:'Liberation Sans', sans-serif;font-weight:bold;text-decoration:underline;transform:scaleX(0.77);transform-origin:100% 0;-webkit-text-stroke:0.1px currentColor;">0,00</div>
<div class="t" style="left:385.37px;top:526.00px;font-size:6.6px;color:#111;font-family:'Liberation Sans', sans-serif;font-weight:bold;text-decoration:underline;transform:scaleX(0.77);transform-origin:100% 0;-webkit-text-stroke:0.1px currentColor;">- 533 047,00</div>
<div class="t" style="left:507.22px;top:526.00px;font-size:6.6px;color:#111;font-family:'Liberation Sans', sans-serif;font-weight:bold;text-decoration:underline;transform:scaleX(0.77);transform-origin:100% 0;-webkit-text-stroke:0.1px currentColor;">- 105 251,40</div>
<div class="t" style="left:564.57px;top:526.00px;font-size:6.6px;color:#111;font-family:'Liberation Sans', sans-serif;font-weight:bold;text-decoration:underline;transform:scaleX(0.77);transform-origin:100% 0;-webkit-text-stroke:0.1px currentColor;">- 638 298,40</div>
<div class="t" style="left:606.23px;top:526.00px;font-size:6.6px;color:#111;font-family:'Liberation Sans', sans-serif;font-weight:bold;text-decoration:underline;transform:scaleX(0.77);transform-origin:100% 0;-webkit-text-stroke:0.1px currentColor;">44,55</div>
<div class="t" style="left:620.27px;top:526.00px;font-size:6.6px;color:#111;font-family:'Liberation Sans', sans-serif;font-weight:bold;text-decoration:underline;transform:scaleX(0.77);transform-origin:100% 0;-webkit-text-stroke:0.1px currentColor;">- 533 047..</div>
<div class="t" style="left:688.41px;top:526.00px;font-size:6.6px;color:#111;font-family:'Liberation Sans', sans-serif;font-weight:bold;text-decoration:underline;transform:scaleX(0.77);transform-origin:100% 0;-webkit-text-stroke:0.1px currentColor;">0,00</div>
<div class="b" style="left:305.00px;top:402.60px;width:27.00px;height:8.00px;background:#0a246a"></div>
<div class="t" style="left:305.30px;top:405.00px;font-size:6.6px;color:#fff;font-family:'Liberation Sans', sans-serif;transform:scaleX(0.8387);">=17500,00</div>
<div class="b" style="left:972.80px;top:118.90px;width:8.20px;height:443.50px;background:#e8e6e2"></div>
<div class="b" style="left:972.80px;top:118.90px;width:8.20px;height:7.30px;background:#f0efeb;border-right:1px solid #666;border-bottom:1px solid #888"></div>
<svg style="left:974.8px;top:121px" width="4.5" height="3" viewBox="0 0 4.5 3"><path d="M0 3H4.5L2.25 0Z" fill="#000"/></svg>
<div class="b" style="left:972.80px;top:126.40px;width:8.20px;height:9.40px;background:#dcdad4;border-top:1px solid #888;border-right:1px solid #666;border-bottom:1px solid #666"></div>
<div class="b" style="left:972.80px;top:554.00px;width:8.20px;height:8.30px;background:#f0efeb;border-right:1px solid #666;border-bottom:1px solid #666"></div>
<svg style="left:974.8px;top:557px" width="4.5" height="3" viewBox="0 0 4.5 3"><path d="M0 0H4.5L2.25 3Z" fill="#000"/></svg>
<svg style="left:1004px;top:161px" width="14.5" height="16" viewBox="0 0 14.5 16"><rect x="0.5" y="0.5" width="13.5" height="15" fill="#f6f7f9"/><path d="M0.5 0.5V15.5H14" fill="none" stroke="#b8bcc4" stroke-width="0.9"/><path d="M2.5 2.5H10M2.5 5H12M2.5 7.5H12M2.5 10H12M2.5 12.5H12" stroke="#a8b0b8" stroke-width="0.7"/><path d="M5 13.5L11 4.5" stroke="#e8b838" stroke-width="1.5"/><path d="M5 13.5L5.6 12.6" stroke="#805020" stroke-width="1.5"/></svg>
<svg style="left:1002.3px;top:180px" width="16.5" height="17" viewBox="0 0 16.5 17"><path d="M0.5 2.5H5.5L7 4H14V13H1.5Z" fill="#f2d472"/><path d="M0.5 5.5H14.5L13 14H1.5Z" fill="#f8e08a" stroke="#d8b050" stroke-width="0.5"/><circle cx="8.5" cy="7.8" r="4.2" fill="#a8c8f0" stroke="#6890c8" stroke-width="1"/><circle cx="7.5" cy="6.8" r="1.5" fill="#d8e8fc"/><path d="M11.3 10.8L15.5 15.5" stroke="#9a7050" stroke-width="2.2" stroke-linecap="round"/></svg>
<svg style="left:1002.8px;top:201px" width="18" height="15" viewBox="0 0 18 15"><path d="M0.5 14.5Q0.5 8.5 5.5 8.5Q10.5 8.5 10.5 14.5Z" fill="#68a8e8"/><path d="M7.5 14.5Q7.5 8.5 12.5 8.5Q17.5 8.5 17.5 14.5Z" fill="#f0a050"/><circle cx="5.5" cy="4.6" r="2.9" fill="#f0c8a0"/><path d="M2.5 4Q2.5 0.8 5.5 0.8Q8.5 0.8 8.5 4Q7.5 2.5 5.5 2.6Q3.5 2.5 2.5 4Z" fill="#5a3418"/><circle cx="12.5" cy="4.6" r="2.9" fill="#f0c8a0"/><path d="M9.5 4Q9.5 0.8 12.5 0.8Q15.5 0.8 15.5 4Q14.5 2.5 12.5 2.6Q10.5 2.5 9.5 4Z" fill="#5a3418"/></svg>
<svg style="left:1002.5px;top:220px" width="17" height="16" viewBox="0 0 17 16"><path d="M4 1.5Q2 3 3.5 5L14.5 15" stroke="#c4c8cc" stroke-width="2" fill="none"/><path d="M15.5 1L7.5 9.5" stroke="#d0d4d8" stroke-width="1.6"/><path d="M8.5 8.5L2.5 14.5" stroke="#181818" stroke-width="3.6" stroke-linecap="round"/></svg>
<svg style="left:1002.5px;top:239.5px" width="17" height="17" viewBox="0 0 17 17"><path d="M1.5 8.5V13L8 16.2V11.5Z" fill="#f2f0fc" stroke="#8080e0" stroke-width="0.8"/><path d="M8 11.5L11.2 5.5L15.5 9V13L8 16.2Z" fill="#f6f4fc" stroke="#8080e0" stroke-width="0.8"/><rect x="11" y="9.5" width="2.6" height="4.2" fill="#eab898"/><path d="M0.8 8.5L7.2 1.2L11.4 5.4L8 11.8Z" fill="#5cd44a" stroke="#18a018" stroke-width="1"/></svg>
<svg style="left:1002.5px;top:259.5px" width="17" height="16" viewBox="0 0 17 16"><path d="M2 10Q1.5 1 8.5 1Q15 1 14.8 10Z" fill="#f8c020"/><path d="M0.5 10.5Q8 8.5 16.5 12Q16 15 12 15Q4 15 0.5 12Z" fill="#e8a010"/><path d="M5.5 2.5Q9 4 9.5 11" stroke="#e0a010" stroke-width="0.9" fill="none"/><ellipse cx="5.5" cy="5" rx="1.5" ry="2.5" fill="#fde080"/></svg>
<div class="b" style="left:0.00px;top:562.40px;width:1024.00px;height:13.60px;background:#bcd6f4"></div>
<div class="b" style="left:4.00px;top:563.70px;width:43.00px;height:12.30px;background:#b0cdee;border-left:1px solid #98b8e0;border-top:1px solid #98b8e0"></div>
<div class="t" style="left:8.75px;top:567.00px;font-size:6.6px;color:#141c28;font-family:'Liberation Sans', sans-serif;transform:scaleX(1.0593);">Ligne: 20</div>
<div class="b" style="left:60.00px;top:563.50px;width:75.50px;height:11.00px;background:#fff;border-top:1px solid #707070;border-left:1px solid #707070"></div>
<div class="b" style="left:127.00px;top:564.50px;width:8.00px;height:9.50px;background:#d4d0c8;border-right:1px solid #444;border-bottom:1px solid #444;border-top:1px solid #fff;border-left:1px solid #fff"></div>
<svg style="left:128.6px;top:568px" width="5" height="3" viewBox="0 0 5 3"><path d="M0 0H5L2.5 3Z" fill="#000"/></svg>
<div class="b" style="left:159.00px;top:563.50px;width:46.00px;height:12.50px;background:#b4d0f0;border-left:1px solid #98b8e0"></div>
<div class="t" style="left:164.25px;top:567.00px;font-size:6.6px;color:#141c28;font-family:'Liberation Sans', sans-serif;transform:scaleX(0.8711);">CTRL</div>
<div class="b" style="left:206.00px;top:563.50px;width:66.50px;height:12.50px;background:#b4d0f0;border-left:1px solid #98b8e0"></div>
<svg style="left:208px;top:564.5px" width="8" height="10" viewBox="0 0 8 10"><path d="M0.5 0.5H5L7 2.5V9.5H0.5Z" fill="#f4f8fc" stroke="#8098b8" stroke-width="0.6"/><path d="M2 8L6 4" stroke="#3050a0" stroke-width="1"/></svg>
<div class="t" style="left:218.00px;top:567.00px;font-size:6.6px;color:#141c28;font-family:'Liberation Sans', sans-serif;transform:scaleX(0.8875);">Documents associés</div>
<div class="t" style="left:288.50px;top:567.00px;font-size:6.6px;color:#141c28;font-family:'Liberation Sans', sans-serif;transform:scaleX(1.0564);">Date de création :</div>
<div class="b" style="left:349.00px;top:564.30px;width:29.50px;height:11.00px;background:#fff;border-top:1px solid #404850;border-left:1px solid #404850;border-right:1px solid #c8d0d8"></div>
<div class="t" style="left:351.00px;top:567.00px;font-size:6.6px;color:#111;font-family:'Liberation Sans', sans-serif;transform:scaleX(0.9349);">__/__/__</div>
<div class="t" style="left:384.75px;top:567.00px;font-size:6.6px;color:#141c28;font-family:'Liberation Sans', sans-serif;transform:scaleX(1.0600);letter-spacing:0.009px;">Mise à jour:</div>
<div class="b" style="left:426.00px;top:564.30px;width:29.25px;height:11.00px;background:#fff;border-top:1px solid #404850;border-left:1px solid #404850;border-right:1px solid #c8d0d8"></div>
<div class="t" style="left:428.00px;top:567.00px;font-size:6.6px;color:#111;font-family:'Liberation Sans', sans-serif;transform:scaleX(0.9349);">__/__/__</div>
<div class="t" style="left:459.75px;top:567.00px;font-size:6.6px;color:#141c28;font-family:'Liberation Sans', sans-serif;transform:scaleX(1.0356);">Monnaie :</div>
<div class="b" style="left:493.50px;top:564.30px;width:26.00px;height:11.00px;background:#fff;border-top:1px solid #404850;border-left:1px solid #404850;border-right:1px solid #c8d0d8"></div>
<div class="t" style="left:495.00px;top:567.00px;font-size:6.6px;color:#111;font-family:'Liberation Sans', sans-serif;transform:scaleX(0.9532);">€</div>
<div class="b" style="left:512.00px;top:564.50px;width:7.50px;height:10.00px;background:#d4d0c8;border-right:1px solid #444;border-bottom:1px solid #444"></div>
<svg style="left:513.3px;top:568.3px" width="4.5" height="3" viewBox="0 0 4.5 3"><path d="M0 0H4.5L2.25 3Z" fill="#000"/></svg>
<svg style="left:522px;top:564px" width="10.5" height="11" viewBox="0 0 10.5 11"><rect x="0.5" y="0.5" width="9.5" height="10" fill="#f4fff4" stroke="#30a030" stroke-width="0.9"/><path d="M2 2L4 4M8.5 2L6.5 4M2 9L4 7M8.5 9L6.5 7" stroke="#20a020" stroke-width="0.9"/></svg>
<div class="b" style="left:70.25px;top:285.60px;width:191.50px;height:114.60px;background:#ffffe1;border-radius:5px 0 0 0;border-right:1.3px solid #b8b8a8;border-bottom:1.3px solid #c8c8b0"></div>
<div class="t" style="left:132.75px;top:291.00px;font-size:6.6px;color:#151515;font-family:'Liberation Sans', sans-serif;font-weight:bold;transform:scaleX(0.9933);">LES CHIFFRES CLES</div>
<div class="t" style="left:78.50px;top:301.00px;font-size:6.8px;color:#151515;font-family:'Liberation Sans', sans-serif;font-weight:bold;transform:scaleX(1.0600);letter-spacing:0.028px;">Récapitulatif</div>
<div class="b" style="left:129.60px;top:304.20px;width:116.00px;height:1.00px;background:#a8a8a0"></div>
<div class="t" style="left:83.00px;top:314.00px;font-size:6.4px;color:#000;font-family:'Liberation Sans', sans-serif;transform:scaleX(1.0600);letter-spacing:0.015px;">Total dépenses HT:</div>
<div class="t" style="left:194.75px;top:314.00px;font-size:6.4px;color:#000;font-family:'Liberation Sans', sans-serif;transform:scaleX(1.0581);">1 196 597,00€</div>
<div class="t" style="left:83.00px;top:322.00px;font-size:6.4px;color:#000;font-family:'Liberation Sans', sans-serif;transform:scaleX(1.0600);letter-spacing:0.051px;">Total recettes HT:</div>
<div class="t" style="left:221.25px;top:322.00px;font-size:6.4px;color:#000;font-family:'Liberation Sans', sans-serif;transform:scaleX(1.0469);">0,00€</div>
<div class="t" style="left:83.00px;top:336.00px;font-size:6.4px;color:#000;font-family:'Liberation Sans', sans-serif;transform:scaleX(1.0600);letter-spacing:0.016px;">Marge en % sur dépenses :</div>
<div class="t" style="left:206.90px;top:336.00px;font-size:6.4px;color:#000;font-family:'Liberation Sans', sans-serif;transform:scaleX(1.0600);letter-spacing:0.025px;">- 100,00%</div>
<div class="t" style="left:83.00px;top:344.00px;font-size:6.4px;color:#000;font-family:'Liberation Sans', sans-serif;transform:scaleX(1.0600);letter-spacing:0.060px;">Marge en % sur recettes :</div>
<div class="t" style="left:83.00px;top:353.00px;font-size:6.4px;color:#000;font-family:'Liberation Sans', sans-serif;transform:scaleX(1.0600);letter-spacing:0.011px;">Marge en montant HT:</div>
<div class="t" style="left:192.25px;top:353.00px;font-size:6.4px;color:#000;font-family:'Liberation Sans', sans-serif;transform:scaleX(1.0600);letter-spacing:0.012px;">-1 196 597,00€</div>
<div class="t" style="left:83.00px;top:361.00px;font-size:6.4px;color:#000;font-family:'Liberation Sans', sans-serif;transform:scaleX(1.0600);letter-spacing:0.022px;">TVA résiduelle:</div>
<div class="t" style="left:196.25px;top:361.00px;font-size:6.4px;color:#000;font-family:'Liberation Sans', sans-serif;transform:scaleX(1.0582);">- 237 961,40€</div>
<div class="t" style="left:78.75px;top:375.00px;font-size:6.8px;color:#151515;font-family:'Liberation Sans', sans-serif;font-weight:bold;transform:scaleX(1.0378);">Formules</div>
<div class="b" style="left:117.00px;top:378.50px;width:128.60px;height:1.00px;background:#a8a8a0"></div>
<div class="t" style="left:87.10px;top:387.00px;font-size:6.8px;color:#151515;font-family:'Liberation Sans', sans-serif;font-weight:bold;transform:scaleX(1.0529);">Prix :</div>
<div class="b" style="left:120.00px;top:386.00px;width:138.00px;height:8.50px;background:#fffff6"></div>
<div class="t" style="left:125.25px;top:387.00px;font-size:6px;color:#000;font-family:'Liberation Sans', sans-serif;transform:scaleX(1.0600);letter-spacing:0.007px;">[PRIX TOTAL HT LIGNE: 19]*3.5%</div>
<div class="b" style="left:337.50px;top:120.50px;width:116.50px;height:107.00px;background:#fff;border:1px solid #8a8a8a;border-right:1.5px solid #707070;border-bottom:1.5px solid #707070"></div>
<div class="b" style="left:338.50px;top:121.50px;width:10.30px;height:104.80px;background:#b8d2f2"></div>
<svg style="left:338.6px;top:120.8px" width="10" height="10" viewBox="0 0 10 10"><circle cx="5" cy="5" r="4.2" fill="#3a7ad0"/><circle cx="5" cy="5" r="3.2" fill="#e4f0fc"/><rect x="4.2" y="4" width="1.6" height="3.6" fill="#2858b0"/><circle cx="5" cy="2.8" r="0.8" fill="#2858b0"/></svg>
<div class="b" style="left:349.00px;top:215.90px;width:103.80px;height:9.60px;background:#c8cce0;border:1px solid #50508a"></div>
<div class="t" style="left:351.50px;top:122.00px;font-size:7px;color:#202020;font-family:'Liberation Sans', sans-serif;transform:scaleX(1.0313);">Informations...</div>
<div class="t" style="left:351.50px;top:132.00px;font-size:7px;color:#202020;font-family:'Liberation Sans', sans-serif;transform:scaleX(0.9768);">Génération des appels de fonds..</div>
<div class="t" style="left:351.50px;top:143.00px;font-size:7px;color:#202020;font-family:'Liberation Sans', sans-serif;transform:scaleX(0.9973);">Définir les tâches à suivre...</div>
<div class="t" style="left:351.50px;top:158.00px;font-size:7px;color:#202020;font-family:'Liberation Sans', sans-serif;transform:scaleX(0.9881);">Gestion des choix...</div>
<div class="t" style="left:351.50px;top:168.00px;font-size:7px;color:#202020;font-family:'Liberation Sans', sans-serif;transform:scaleX(0.9532);">Gestion des TMA...</div>
<div class="t" style="left:351.50px;top:178.00px;font-size:7px;color:#202020;font-family:'Liberation Sans', sans-serif;transform:scaleX(0.9829);">Gestion des réserves...</div>
<div class="t" style="left:351.50px;top:192.00px;font-size:7px;color:#202020;font-family:'Liberation Sans', sans-serif;transform:scaleX(0.9763);">Documents associés...</div>
<div class="t" style="left:351.50px;top:202.00px;font-size:7px;color:#202020;font-family:'Liberation Sans', sans-serif;transform:scaleX(0.9769);">Versionning</div>
<div class="t" style="left:351.50px;top:216.00px;font-size:7px;color:#202020;font-family:'Liberation Sans', sans-serif;transform:scaleX(0.9980);">Validation comme affaire</div>
<div class="b" style="left:349.50px;top:155.00px;width:103.00px;height:0.80px;background:#c8c8c8"></div>
<div class="b" style="left:349.50px;top:189.20px;width:103.00px;height:0.80px;background:#c8c8c8"></div>
<div class="b" style="left:349.50px;top:213.00px;width:103.00px;height:0.60px;background:#ececec"></div>
<div class="b" style="left:352.00px;top:128.80px;width:2.50px;height:0.60px;background:#666"></div>
<div class="b" style="left:352.00px;top:138.80px;width:4.50px;height:0.60px;background:#666"></div>
<div class="b" style="left:352.00px;top:149.30px;width:4.50px;height:0.60px;background:#666"></div>
<div class="b" style="left:356.00px;top:163.80px;width:3.50px;height:0.60px;background:#666"></div>
<div class="b" style="left:359.00px;top:173.80px;width:3.00px;height:0.60px;background:#666"></div>
<div class="b" style="left:361.00px;top:183.80px;width:2.50px;height:0.60px;background:#666"></div>
<div class="b" style="left:356.50px;top:198.30px;width:4.00px;height:0.60px;background:#666"></div>
<div class="b" style="left:359.50px;top:208.50px;width:3.00px;height:0.60px;background:#666"></div>
<div class="b" style="left:352.00px;top:222.50px;width:4.50px;height:0.60px;background:#666"></div>
<svg style="left:447px;top:203.8px" width="3" height="4" viewBox="0 0 3 4"><path d="M0 0L3 2L0 4Z" fill="#111"/></svg>
<svg style="left:339.5px;top:215.8px" width="10" height="10" viewBox="0 0 10 10"><circle cx="5" cy="5" r="4.5" fill="#28a028"/><circle cx="5" cy="4.4" r="3.4" fill="#60d050"/><path d="M2.2 5H7M5 2.8L7.3 5L5 7.2" fill="none" stroke="#fff" stroke-width="1.2"/></svg>
</body></html>
